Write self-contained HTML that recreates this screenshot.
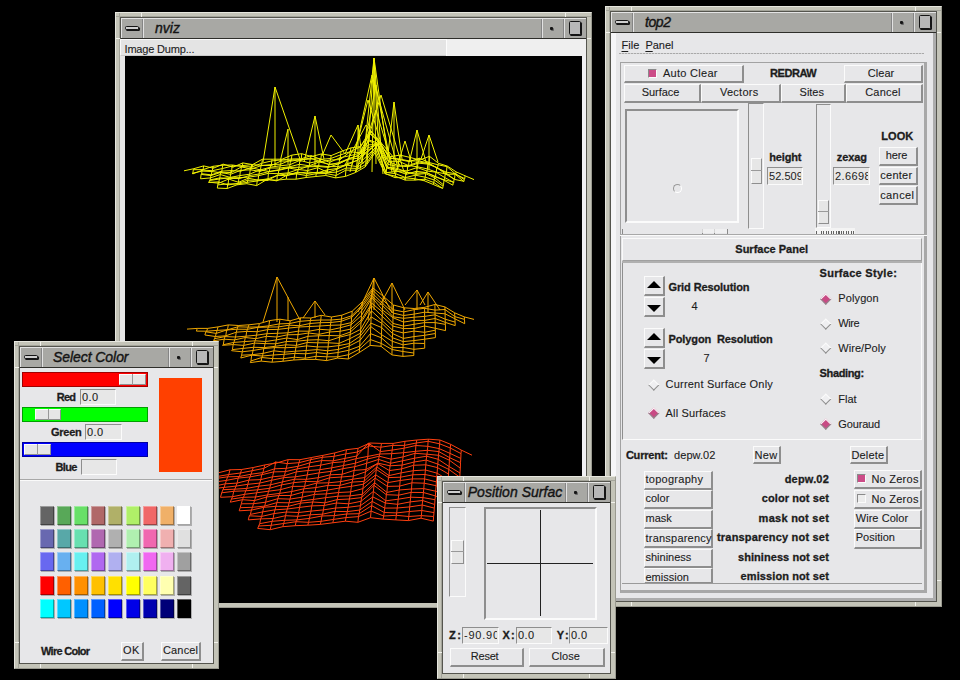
<!DOCTYPE html><html><head><meta charset="utf-8"><style>
html,body{margin:0;padding:0;background:#000;}
body{width:960px;height:680px;position:relative;overflow:hidden;font-family:"Liberation Sans",sans-serif;}
body div,body span,body svg{position:absolute;box-sizing:content-box;}
span{white-space:nowrap;}
</style></head><body>
<div style="left:115px;top:12px;width:475px;height:594px;background:#c4c4b8;border:1px solid;border-color:#e6e6de #9a9a90 #9a9a90 #e6e6de"></div>
<div style="left:116px;top:16px;width:475px;height:1px;background:#a4a49a"></div>
<div style="left:119px;top:13px;width:1px;height:594px;background:#a4a49a"></div>
<div style="left:141px;top:13px;width:1px;height:5px;background:#f2f2ec"></div>
<div style="left:565px;top:13px;width:1px;height:5px;background:#f2f2ec"></div>
<div style="left:116px;top:38px;width:5px;height:1px;background:#f2f2ec"></div>
<div style="left:586px;top:38px;width:5px;height:1px;background:#f2f2ec"></div>
<div style="left:141px;top:602px;width:1px;height:5px;background:#f2f2ec"></div>
<div style="left:565px;top:602px;width:1px;height:5px;background:#f2f2ec"></div>
<div style="left:116px;top:581px;width:5px;height:1px;background:#f2f2ec"></div>
<div style="left:586px;top:581px;width:5px;height:1px;background:#f2f2ec"></div>
<div style="left:120px;top:17px;width:465px;height:584px;border:1px solid #55554e;background:#e7e7e9"></div>
<div style="left:121px;top:18px;width:464px;height:20px;background:#a8a8a4;border-left:1px solid #e4e4e4;border-top:1px solid #e4e4e4"></div>
<div style="left:121px;top:38px;width:465px;height:1px;background:#2e2e2a"></div>
<div style="left:142px;top:19px;width:1px;height:19px;background:#858585"></div>
<div style="left:143px;top:19px;width:1px;height:19px;background:#e2e2e2"></div>
<div style="left:125px;top:26px;width:12px;height:2px;background:#cfcfcf;border:1px solid #151515;border-radius:1.5px;box-shadow:1px 1px 0 #151515"></div>
<div style="left:541px;top:19px;width:1px;height:19px;background:#858585"></div>
<div style="left:542px;top:19px;width:1px;height:19px;background:#e2e2e2"></div>
<div style="left:563px;top:19px;width:1px;height:19px;background:#858585"></div>
<div style="left:564px;top:19px;width:1px;height:19px;background:#e2e2e2"></div>
<div style="left:550px;top:27px;width:3px;height:3px;background:#151515;border-radius:1px;box-shadow:1px 1px 0 #666"></div>
<div style="left:569px;top:21px;width:10px;height:12px;border:1px solid #151515;background:#b8b8b8;box-shadow:1px 1px 0 #151515;border-radius:1.5px"></div>
<span style="left:155.00px;top:21.35px;font-size:14px;line-height:14px;font-weight:normal;font-style:italic;color:#141414;letter-spacing:0.035px;-webkit-text-stroke:0.4px #141414;">nviz</span>
<div style="left:120px;top:39px;width:325px;height:15px;background:#e4e4e4;border-style:solid;border-width:1px 1px 1px 1px;border-color:#fafafa #cacaca #cacaca #fafafa;"></div>
<div style="left:447px;top:39px;width:139px;height:17px;background:#efefef"></div>
<div style="left:446px;top:39px;width:1px;height:17px;background:#fcfcfc"></div>
<span style="left:124.50px;top:44.19px;font-size:11px;line-height:11px;font-weight:normal;font-style:normal;color:#1c1c1c;-webkit-text-stroke:0.10px #1c1c1c;letter-spacing:-0.178px;">Image Dump...</span>
<div style="left:125px;top:56px;width:457px;height:547px;background:#000"></div>
<div style="left:582px;top:56px;width:4px;height:547px;background:#f0f0f2"></div>
<div style="left:120px;top:56px;width:5px;height:547px;background:#e6e6e6"></div>
<svg style="left:0;top:0" width="960" height="680" viewBox="0 0 960 680"><path d="M184.0,170.8 L193.8,168.7 L203.6,165.9 L213.4,168.2 L223.2,164.1 L233.0,167.2 L242.8,162.9 L252.6,164.6 L262.4,159.2 L272.2,159.2 L282.1,159.2 L291.9,155.1 L301.7,153.7 L311.5,156.6 L321.4,153.9 L331.2,155.6 L341.0,151.5 L350.9,147.9 L360.7,146.5 L370.5,133.2 L380.4,144.9 L390.2,156.7 L400.0,155.1 L409.9,157.4 L419.7,160.0 L429.5,156.3 L438.5,163.3 L447.4,166.1 L456.2,171.9 L465.1,175.8 L474.0,179.6 M193.3,169.7 L203.1,169.6 L212.9,166.3 L222.7,165.2 L232.5,165.0 L242.3,166.6 L252.1,166.9 L261.9,163.2 L271.8,160.9 L281.6,159.9 L291.4,159.0 L301.3,158.8 L311.1,155.6 L320.9,159.4 L330.7,158.5 L340.6,154.9 L350.4,151.6 L360.2,147.0 L370.1,130.7 L379.9,142.7 L389.8,157.7 L399.6,159.7 L409.4,161.6 L419.3,158.2 L429.1,162.5 L438.0,164.8 L446.9,166.6 L455.8,174.2 L464.7,178.7 M192.8,173.9 L202.6,170.1 L212.4,170.7 L222.2,168.6 L232.0,166.1 L241.8,165.7 L251.7,164.6 L261.5,165.3 L271.3,165.6 L281.1,161.0 L291.0,161.1 L300.8,159.6 L310.6,158.1 L320.5,161.8 L330.3,160.0 L340.1,159.6 L350.0,151.8 L359.8,152.7 L369.6,133.7 L379.5,141.8 L389.3,158.3 L399.2,158.9 L409.0,160.9 L418.8,160.9 L428.7,163.0 L437.6,168.3 L446.5,172.2 L455.4,173.7 L464.3,179.6 M192.3,173.2 L202.1,171.1 L211.9,171.5 L221.7,172.9 L231.6,172.4 L241.4,166.9 L251.2,169.1 L261.0,165.7 L270.8,164.6 L280.7,164.2 L290.5,160.0 L300.3,159.8 L310.2,159.0 L320.0,158.8 L329.8,162.3 L339.7,157.8 L349.5,155.8 L359.3,153.3 L369.2,140.1 L379.0,143.4 L388.9,161.4 L398.7,161.2 L408.6,165.7 L418.4,161.9 L428.3,163.6 L437.2,168.0 L446.1,174.3 L455.0,174.2 L463.9,181.6 M201.6,173.7 L211.4,174.9 L221.3,171.2 L231.1,170.6 L240.9,171.1 L250.7,167.7 L260.5,169.9 L270.3,167.2 L280.2,165.8 L290.0,164.7 L299.9,160.3 L309.7,163.0 L319.5,160.8 L329.4,164.9 L339.2,162.5 L349.1,158.5 L358.9,155.2 L368.7,140.9 L378.6,145.0 L388.4,161.6 L398.3,165.6 L408.1,166.8 L418.0,163.1 L427.8,164.1 L436.8,167.5 L445.7,172.8 L454.5,179.4 L463.4,181.2 M201.1,174.4 L210.9,175.6 L220.8,172.4 L230.6,174.3 L240.4,170.4 L250.2,169.8 L260.0,171.4 L269.9,168.0 L279.7,168.0 L289.5,166.8 L299.4,164.3 L309.2,165.8 L319.1,162.0 L328.9,164.1 L338.8,163.8 L348.6,158.8 L358.4,155.7 L368.3,144.8 L378.1,144.6 L388.0,164.4 L397.8,166.4 L407.7,165.4 L417.5,166.8 L427.4,168.9 L436.3,172.1 L445.2,173.8 L454.1,179.1 M200.6,178.8 L210.5,177.9 L220.3,174.5 L230.1,177.4 L239.9,175.6 L249.7,174.2 L259.6,169.9 L269.4,171.5 L279.2,169.6 L289.1,167.4 L298.9,167.3 L308.8,166.8 L318.6,166.5 L328.4,167.4 L338.3,163.9 L348.1,159.4 L358.0,158.2 L367.8,147.9 L377.7,144.1 L387.5,167.1 L397.4,169.9 L407.3,170.9 L417.1,167.5 L427.0,171.0 L435.9,172.2 L444.8,177.6 L453.7,182.4 M210.0,179.9 L219.8,177.9 L229.6,178.4 L239.4,178.6 L249.2,175.6 L259.1,174.0 L268.9,171.6 L278.8,170.3 L288.6,168.0 L298.5,169.7 L308.3,166.1 L318.1,165.7 L328.0,166.6 L337.8,166.6 L347.7,164.7 L357.5,160.0 L367.4,150.9 L377.3,143.6 L387.1,167.2 L397.0,168.2 L406.8,172.5 L416.7,173.2 L426.5,172.5 L435.5,177.0 L444.4,179.8 L453.3,182.0 M209.5,180.5 L219.3,179.0 L229.1,177.8 L238.9,177.7 L248.8,177.1 L258.6,175.7 L268.4,173.3 L278.3,173.7 L288.1,172.9 L298.0,169.5 L307.8,170.5 L317.7,167.7 L327.5,172.3 L337.4,169.1 L347.2,163.7 L357.1,160.5 L367.0,152.6 L376.8,143.6 L386.7,168.0 L396.5,170.8 L406.4,174.3 L416.2,171.3 L426.1,172.5 L435.0,176.2 L444.0,180.3 L452.9,185.2 M209.0,182.2 L218.8,183.2 L228.6,179.0 L238.5,182.3 L248.3,178.2 L258.1,180.2 L268.0,178.8 L277.8,175.3 L287.7,173.8 L297.5,173.2 L307.4,172.0 L317.2,173.0 L327.1,169.9 L336.9,168.5 L346.8,165.2 L356.6,166.5 L366.5,156.2 L376.4,147.0 L386.2,172.7 L396.1,171.4 L405.9,172.2 L415.8,174.4 L425.7,173.6 L434.6,177.7 L443.5,184.8 M208.5,182.4 L218.3,181.9 L228.1,185.0 L238.0,183.3 L247.8,180.3 L257.6,180.0 L267.5,180.5 L277.3,175.3 L287.2,175.7 L297.1,172.1 L306.9,173.6 L316.8,172.3 L326.6,172.8 L336.5,172.1 L346.3,168.0 L356.2,168.4 L366.1,160.5 L375.9,146.5 L385.8,172.4 L395.6,173.7 L405.5,177.5 L415.4,175.2 L425.2,177.2 L434.2,179.9 L443.1,186.2 M217.8,184.9 L227.7,183.9 L237.5,184.0 L247.3,182.3 L257.2,181.0 L267.0,179.3 L276.9,180.9 L286.7,175.2 L296.6,173.9 L306.4,175.5 L316.3,173.7 L326.2,173.5 L336.0,175.5 L345.9,170.1 L355.7,170.3 L365.6,164.5 L375.5,149.5 L385.3,174.0 L395.2,176.1 L405.1,180.1 L414.9,180.1 L424.8,179.2 L433.8,182.5 L442.7,188.4 M217.3,188.1 L227.2,188.5 L237.0,184.8 L246.8,183.7 L256.7,185.6 L266.5,179.7 L276.4,180.2 L286.3,179.2 L296.1,179.2 L306.0,177.5 L315.8,176.5 L325.7,175.5 L335.6,177.9 L345.4,176.4 L355.3,172.6 L365.2,166.9 L375.0,152.8 L384.9,173.2 L394.8,177.6 L404.6,177.8 L414.5,178.7 L424.4,180.8 L433.3,184.5 L442.3,188.3 M193.8,168.7 L193.3,169.7 L192.8,173.9 L192.3,173.2 M203.6,165.9 L203.1,169.6 L202.6,170.1 L202.1,171.1 L201.6,173.7 L201.1,174.4 L200.6,178.8 M213.4,168.2 L212.9,166.3 L212.4,170.7 L211.9,171.5 L211.4,174.9 L210.9,175.6 L210.5,177.9 L210.0,179.9 L209.5,180.5 L209.0,182.2 L208.5,182.4 M223.2,164.1 L222.7,165.2 L222.2,168.6 L221.7,172.9 L221.3,171.2 L220.8,172.4 L220.3,174.5 L219.8,177.9 L219.3,179.0 L218.8,183.2 L218.3,181.9 L217.8,184.9 L217.3,188.1 M233.0,167.2 L232.5,165.0 L232.0,166.1 L231.6,172.4 L231.1,170.6 L230.6,174.3 L230.1,177.4 L229.6,178.4 L229.1,177.8 L228.6,179.0 L228.1,185.0 L227.7,183.9 L227.2,188.5 M242.8,162.9 L242.3,166.6 L241.8,165.7 L241.4,166.9 L240.9,171.1 L240.4,170.4 L239.9,175.6 L239.4,178.6 L238.9,177.7 L238.5,182.3 L238.0,183.3 L237.5,184.0 L237.0,184.8 M252.6,164.6 L252.1,166.9 L251.7,164.6 L251.2,169.1 L250.7,167.7 L250.2,169.8 L249.7,174.2 L249.2,175.6 L248.8,177.1 L248.3,178.2 L247.8,180.3 L247.3,182.3 L246.8,183.7 M262.4,159.2 L261.9,163.2 L261.5,165.3 L261.0,165.7 L260.5,169.9 L260.0,171.4 L259.6,169.9 L259.1,174.0 L258.6,175.7 L258.1,180.2 L257.6,180.0 L257.2,181.0 L256.7,185.6 M272.2,159.2 L271.8,160.9 L271.3,165.6 L270.8,164.6 L270.3,167.2 L269.9,168.0 L269.4,171.5 L268.9,171.6 L268.4,173.3 L268.0,178.8 L267.5,180.5 L267.0,179.3 L266.5,179.7 M282.1,159.2 L281.6,159.9 L281.1,161.0 L280.7,164.2 L280.2,165.8 L279.7,168.0 L279.2,169.6 L278.8,170.3 L278.3,173.7 L277.8,175.3 L277.3,175.3 L276.9,180.9 L276.4,180.2 M291.9,155.1 L291.4,159.0 L291.0,161.1 L290.5,160.0 L290.0,164.7 L289.5,166.8 L289.1,167.4 L288.6,168.0 L288.1,172.9 L287.7,173.8 L287.2,175.7 L286.7,175.2 L286.3,179.2 M301.7,153.7 L301.3,158.8 L300.8,159.6 L300.3,159.8 L299.9,160.3 L299.4,164.3 L298.9,167.3 L298.5,169.7 L298.0,169.5 L297.5,173.2 L297.1,172.1 L296.6,173.9 L296.1,179.2 M311.5,156.6 L311.1,155.6 L310.6,158.1 L310.2,159.0 L309.7,163.0 L309.2,165.8 L308.8,166.8 L308.3,166.1 L307.8,170.5 L307.4,172.0 L306.9,173.6 L306.4,175.5 L306.0,177.5 M321.4,153.9 L320.9,159.4 L320.5,161.8 L320.0,158.8 L319.5,160.8 L319.1,162.0 L318.6,166.5 L318.1,165.7 L317.7,167.7 L317.2,173.0 L316.8,172.3 L316.3,173.7 L315.8,176.5 M331.2,155.6 L330.7,158.5 L330.3,160.0 L329.8,162.3 L329.4,164.9 L328.9,164.1 L328.4,167.4 L328.0,166.6 L327.5,172.3 L327.1,169.9 L326.6,172.8 L326.2,173.5 L325.7,175.5 M341.0,151.5 L340.6,154.9 L340.1,159.6 L339.7,157.8 L339.2,162.5 L338.8,163.8 L338.3,163.9 L337.8,166.6 L337.4,169.1 L336.9,168.5 L336.5,172.1 L336.0,175.5 L335.6,177.9 M350.9,147.9 L350.4,151.6 L350.0,151.8 L349.5,155.8 L349.1,158.5 L348.6,158.8 L348.1,159.4 L347.7,164.7 L347.2,163.7 L346.8,165.2 L346.3,168.0 L345.9,170.1 L345.4,176.4 M360.7,146.5 L360.2,147.0 L359.8,152.7 L359.3,153.3 L358.9,155.2 L358.4,155.7 L358.0,158.2 L357.5,160.0 L357.1,160.5 L356.6,166.5 L356.2,168.4 L355.7,170.3 L355.3,172.6 M370.5,133.2 L370.1,130.7 L369.6,133.7 L369.2,140.1 L368.7,140.9 L368.3,144.8 L367.8,147.9 L367.4,150.9 L367.0,152.6 L366.5,156.2 L366.1,160.5 L365.6,164.5 L365.2,166.9 M380.4,144.9 L379.9,142.7 L379.5,141.8 L379.0,143.4 L378.6,145.0 L378.1,144.6 L377.7,144.1 L377.3,143.6 L376.8,143.6 L376.4,147.0 L375.9,146.5 L375.5,149.5 L375.0,152.8 M390.2,156.7 L389.8,157.7 L389.3,158.3 L388.9,161.4 L388.4,161.6 L388.0,164.4 L387.5,167.1 L387.1,167.2 L386.7,168.0 L386.2,172.7 L385.8,172.4 L385.3,174.0 L384.9,173.2 M400.0,155.1 L399.6,159.7 L399.2,158.9 L398.7,161.2 L398.3,165.6 L397.8,166.4 L397.4,169.9 L397.0,168.2 L396.5,170.8 L396.1,171.4 L395.6,173.7 L395.2,176.1 L394.8,177.6 M409.9,157.4 L409.4,161.6 L409.0,160.9 L408.6,165.7 L408.1,166.8 L407.7,165.4 L407.3,170.9 L406.8,172.5 L406.4,174.3 L405.9,172.2 L405.5,177.5 L405.1,180.1 L404.6,177.8 M419.7,160.0 L419.3,158.2 L418.8,160.9 L418.4,161.9 L418.0,163.1 L417.5,166.8 L417.1,167.5 L416.7,173.2 L416.2,171.3 L415.8,174.4 L415.4,175.2 L414.9,180.1 L414.5,178.7 M429.5,156.3 L429.1,162.5 L428.7,163.0 L428.3,163.6 L427.8,164.1 L427.4,168.9 L427.0,171.0 L426.5,172.5 L426.1,172.5 L425.7,173.6 L425.2,177.2 L424.8,179.2 L424.4,180.8 M438.5,163.3 L438.0,164.8 L437.6,168.3 L437.2,168.0 L436.8,167.5 L436.3,172.1 L435.9,172.2 L435.5,177.0 L435.0,176.2 L434.6,177.7 L434.2,179.9 L433.8,182.5 L433.3,184.5 M447.4,166.1 L446.9,166.6 L446.5,172.2 L446.1,174.3 L445.7,172.8 L445.2,173.8 L444.8,177.6 L444.4,179.8 L444.0,180.3 L443.5,184.8 L443.1,186.2 L442.7,188.4 L442.3,188.3 M456.2,171.9 L455.8,174.2 L455.4,173.7 L455.0,174.2 L454.5,179.4 L454.1,179.1 L453.7,182.4 L453.3,182.0 L452.9,185.2 M465.1,175.8 L464.7,178.7 L464.3,179.6 L463.9,181.6 L463.4,181.2" fill="none" stroke="#f0f000" stroke-width="1.0" stroke-opacity="1.0"/><path d="M275,87 L263,162 M275,87 L301,162 M275,87 L275,167 M288,129 L288,164 M288,129 L280,162 M315,116 L304,162 M315,116 L324,159 M315,116 L315,167 M331,135 L322,156 M331,135 L345,154 M358,125 L345,154 M358,125 L363,164 M358,125 L358,169 M374,58 L364,154 M374,58 L367,164 M374,58 L372,172 M374,58 L379,154 M374,58 L383,174 M374,58 L388,159 M374,58 L376,164 M376,85 L360,169 M376,85 L392,172 M376,110 L356,172 M376,110 L395,174 M372,75 L352,165 M372,75 L398,168 M368,100 L350,172 M368,100 L386,160 M381,95 L362,160 M381,95 L404,172 M366,125 L345,165 M366,125 L400,165 M394,102 L388,154 M394,102 L402,159 M394,102 L394,169 M405,141 L398,164 M405,141 L412,164 M417,130 L410,159 M417,130 L426,162 M417,130 L417,169 M429,135 L421,159 M429,135 L438,162 M429,135 L429,169" fill="none" stroke="#f0f000" stroke-width="1.0"/><path d="M187.0,329.1 L197.3,328.4 L207.6,328.4 L218.0,326.9 L228.3,324.9 L238.6,325.5 L248.9,324.8 L259.3,323.6 L269.6,320.6 L279.9,319.2 L290.2,320.8 L300.6,317.8 L310.9,318.0 L321.2,315.3 L331.5,317.0 L341.8,315.2 L352.2,311.2 L362.5,301.6 L372.8,287.9 L383.2,296.2 L393.5,305.0 L403.9,307.8 L414.2,308.5 L424.6,307.3 L434.9,304.5 L444.9,306.9 L454.6,312.8 L464.3,316.9 L474.0,319.4 M196.4,331.1 L206.7,331.2 L217.1,330.4 L227.5,329.8 L237.8,326.8 L248.2,327.1 L258.6,327.0 L268.9,325.8 L279.3,323.9 L289.7,323.5 L300.0,321.3 L310.4,320.5 L320.8,320.0 L331.1,320.0 L341.5,319.1 L351.9,315.7 L362.2,304.9 L372.6,290.0 L383.0,300.2 L393.4,309.8 L403.8,311.9 L414.2,309.6 L424.6,308.3 L435.0,310.1 L445.0,309.5 L454.8,316.6 L464.5,319.4 M205.8,331.8 L216.2,333.4 L226.6,330.0 L237.1,329.2 L247.5,329.3 L257.9,327.3 L268.3,327.1 L278.7,326.9 L289.1,325.2 L299.5,325.7 L309.9,323.5 L320.3,322.7 L330.8,322.5 L341.2,321.3 L351.6,317.5 L362.0,307.1 L372.4,293.2 L382.8,303.5 L393.3,313.1 L403.7,315.5 L414.2,314.1 L424.6,312.2 L435.0,313.0 L445.1,313.8 L454.9,318.8 L464.7,323.7 M204.9,335.0 L215.4,336.5 L225.8,335.8 L236.3,332.2 L246.7,331.4 L257.2,331.7 L267.6,329.6 L278.1,329.4 L288.6,328.1 L299.0,327.0 L309.5,326.5 L319.9,326.0 L330.4,325.3 L340.8,325.0 L351.3,322.6 L361.7,310.6 L372.2,296.1 L382.7,305.8 L393.2,316.8 L403.6,318.3 L414.1,317.2 L424.6,316.4 L435.1,314.8 L445.2,319.2 L455.1,322.1 M214.5,338.7 L225.0,336.6 L235.5,337.0 L246.0,336.2 L256.5,335.2 L267.0,333.7 L277.5,333.3 L288.0,332.8 L298.5,331.1 L309.0,331.2 L319.5,329.3 L330.0,330.0 L340.5,327.7 L351.0,324.8 L361.5,315.4 L372.0,297.5 L382.5,310.0 L393.0,317.7 L403.6,322.1 L414.1,320.4 L424.6,320.4 L435.1,318.5 L445.3,322.4 L455.2,325.6 M213.6,340.7 L224.2,339.2 L234.7,339.9 L245.3,337.5 L255.8,338.7 L266.3,336.3 L276.9,337.0 L287.4,334.8 L298.0,334.6 L308.5,333.0 L319.1,334.3 L329.6,332.0 L340.1,331.3 L350.7,329.1 L361.2,320.0 L371.8,303.2 L382.3,311.9 L392.9,323.4 L403.5,326.1 L414.1,324.3 L424.6,322.6 L435.2,322.6 L445.4,324.4 M223.3,344.7 L233.9,342.4 L244.5,341.6 L255.1,340.8 L265.7,341.5 L276.3,339.9 L286.9,338.0 L297.5,339.6 L308.0,336.3 L318.6,335.8 L329.2,335.5 L339.8,335.8 L350.4,332.0 L361.0,322.5 L371.6,305.9 L382.2,316.2 L392.8,326.1 L403.4,328.6 L414.0,328.5 L424.6,326.0 L435.3,328.3 L445.5,330.6 M222.5,345.3 L233.2,344.6 L243.8,345.4 L254.4,343.1 L265.0,343.6 L275.7,343.8 L286.3,341.5 L296.9,341.2 L307.6,340.1 L318.2,339.7 L328.8,340.7 L339.5,337.2 L350.1,334.6 L360.7,329.3 L371.4,310.8 L382.0,320.6 L392.7,330.3 L403.3,332.9 L414.0,331.1 L424.7,332.3 L435.3,330.2 M232.4,349.6 L243.1,348.4 L253.7,347.3 L264.4,347.6 L275.1,346.3 L285.8,344.8 L296.4,345.4 L307.1,342.5 L317.8,342.8 L328.4,342.8 L339.1,343.4 L349.8,338.7 L360.5,333.2 L371.1,316.8 L381.8,323.3 L392.6,333.6 L403.3,338.4 L414.0,336.6 L424.7,335.3 L435.4,333.5 M231.6,350.7 L242.3,351.8 L253.0,350.5 L263.8,348.6 L274.5,347.6 L285.2,347.7 L295.9,347.3 L306.6,345.9 L317.3,346.9 L328.1,346.9 L338.8,345.6 L349.5,343.5 L360.2,336.2 L370.9,323.1 L381.7,327.6 L392.4,337.7 L403.2,341.6 L413.9,340.6 L424.7,339.2 L435.4,337.6 M241.6,355.2 L252.3,354.7 L263.1,353.4 L273.9,350.8 L284.6,352.1 L295.4,351.2 L306.2,350.5 L316.9,349.6 L327.7,350.8 L338.4,349.4 L349.2,346.0 L360.0,340.4 L370.7,326.5 L381.5,334.6 L392.3,341.3 L403.1,344.9 L413.9,343.2 L424.7,343.5 M240.8,358.0 L251.6,355.2 L262.5,356.0 L273.3,355.0 L284.1,354.3 L294.9,353.4 L305.7,353.8 L316.5,352.5 L327.3,353.9 L338.1,352.5 L348.9,350.2 L359.7,346.2 L370.5,333.6 L381.4,337.8 L392.2,347.3 L403.0,347.5 L413.9,349.3 L424.7,348.2 M251.0,360.9 L261.8,357.5 L272.7,358.6 L283.5,358.7 L294.4,357.2 L305.2,358.2 L316.1,356.3 L326.9,356.8 L337.8,356.8 L348.6,354.7 L359.5,349.1 L370.3,339.5 L381.2,343.4 L392.1,349.5 L402.9,351.5 L413.8,353.0 M250.3,362.6 L261.2,361.1 L272.1,362.2 L282.9,361.3 L293.8,360.0 L304.7,359.4 L315.6,359.4 L326.5,360.6 L337.4,358.1 L348.3,359.0 L359.2,352.6 L370.1,345.4 L381.0,346.3 L391.9,354.9 L402.9,356.4 L413.8,355.5 M197.3,328.4 L196.4,331.1 M207.6,328.4 L206.7,331.2 L205.8,331.8 L204.9,335.0 M218.0,326.9 L217.1,330.4 L216.2,333.4 L215.4,336.5 L214.5,338.7 L213.6,340.7 M228.3,324.9 L227.5,329.8 L226.6,330.0 L225.8,335.8 L225.0,336.6 L224.2,339.2 L223.3,344.7 L222.5,345.3 M238.6,325.5 L237.8,326.8 L237.1,329.2 L236.3,332.2 L235.5,337.0 L234.7,339.9 L233.9,342.4 L233.2,344.6 L232.4,349.6 L231.6,350.7 M248.9,324.8 L248.2,327.1 L247.5,329.3 L246.7,331.4 L246.0,336.2 L245.3,337.5 L244.5,341.6 L243.8,345.4 L243.1,348.4 L242.3,351.8 L241.6,355.2 L240.8,358.0 M259.3,323.6 L258.6,327.0 L257.9,327.3 L257.2,331.7 L256.5,335.2 L255.8,338.7 L255.1,340.8 L254.4,343.1 L253.7,347.3 L253.0,350.5 L252.3,354.7 L251.6,355.2 L251.0,360.9 L250.3,362.6 M269.6,320.6 L268.9,325.8 L268.3,327.1 L267.6,329.6 L267.0,333.7 L266.3,336.3 L265.7,341.5 L265.0,343.6 L264.4,347.6 L263.8,348.6 L263.1,353.4 L262.5,356.0 L261.8,357.5 L261.2,361.1 M279.9,319.2 L279.3,323.9 L278.7,326.9 L278.1,329.4 L277.5,333.3 L276.9,337.0 L276.3,339.9 L275.7,343.8 L275.1,346.3 L274.5,347.6 L273.9,350.8 L273.3,355.0 L272.7,358.6 L272.1,362.2 M290.2,320.8 L289.7,323.5 L289.1,325.2 L288.6,328.1 L288.0,332.8 L287.4,334.8 L286.9,338.0 L286.3,341.5 L285.8,344.8 L285.2,347.7 L284.6,352.1 L284.1,354.3 L283.5,358.7 L282.9,361.3 M300.6,317.8 L300.0,321.3 L299.5,325.7 L299.0,327.0 L298.5,331.1 L298.0,334.6 L297.5,339.6 L296.9,341.2 L296.4,345.4 L295.9,347.3 L295.4,351.2 L294.9,353.4 L294.4,357.2 L293.8,360.0 M310.9,318.0 L310.4,320.5 L309.9,323.5 L309.5,326.5 L309.0,331.2 L308.5,333.0 L308.0,336.3 L307.6,340.1 L307.1,342.5 L306.6,345.9 L306.2,350.5 L305.7,353.8 L305.2,358.2 L304.7,359.4 M321.2,315.3 L320.8,320.0 L320.3,322.7 L319.9,326.0 L319.5,329.3 L319.1,334.3 L318.6,335.8 L318.2,339.7 L317.8,342.8 L317.3,346.9 L316.9,349.6 L316.5,352.5 L316.1,356.3 L315.6,359.4 M331.5,317.0 L331.1,320.0 L330.8,322.5 L330.4,325.3 L330.0,330.0 L329.6,332.0 L329.2,335.5 L328.8,340.7 L328.4,342.8 L328.1,346.9 L327.7,350.8 L327.3,353.9 L326.9,356.8 L326.5,360.6 M341.8,315.2 L341.5,319.1 L341.2,321.3 L340.8,325.0 L340.5,327.7 L340.1,331.3 L339.8,335.8 L339.5,337.2 L339.1,343.4 L338.8,345.6 L338.4,349.4 L338.1,352.5 L337.8,356.8 L337.4,358.1 M352.2,311.2 L351.9,315.7 L351.6,317.5 L351.3,322.6 L351.0,324.8 L350.7,329.1 L350.4,332.0 L350.1,334.6 L349.8,338.7 L349.5,343.5 L349.2,346.0 L348.9,350.2 L348.6,354.7 L348.3,359.0 M362.5,301.6 L362.2,304.9 L362.0,307.1 L361.7,310.6 L361.5,315.4 L361.2,320.0 L361.0,322.5 L360.7,329.3 L360.5,333.2 L360.2,336.2 L360.0,340.4 L359.7,346.2 L359.5,349.1 L359.2,352.6 M372.8,287.9 L372.6,290.0 L372.4,293.2 L372.2,296.1 L372.0,297.5 L371.8,303.2 L371.6,305.9 L371.4,310.8 L371.1,316.8 L370.9,323.1 L370.7,326.5 L370.5,333.6 L370.3,339.5 L370.1,345.4 M383.2,296.2 L383.0,300.2 L382.8,303.5 L382.7,305.8 L382.5,310.0 L382.3,311.9 L382.2,316.2 L382.0,320.6 L381.8,323.3 L381.7,327.6 L381.5,334.6 L381.4,337.8 L381.2,343.4 L381.0,346.3 M393.5,305.0 L393.4,309.8 L393.3,313.1 L393.2,316.8 L393.0,317.7 L392.9,323.4 L392.8,326.1 L392.7,330.3 L392.6,333.6 L392.4,337.7 L392.3,341.3 L392.2,347.3 L392.1,349.5 L391.9,354.9 M403.9,307.8 L403.8,311.9 L403.7,315.5 L403.6,318.3 L403.6,322.1 L403.5,326.1 L403.4,328.6 L403.3,332.9 L403.3,338.4 L403.2,341.6 L403.1,344.9 L403.0,347.5 L402.9,351.5 L402.9,356.4 M414.2,308.5 L414.2,309.6 L414.2,314.1 L414.1,317.2 L414.1,320.4 L414.1,324.3 L414.0,328.5 L414.0,331.1 L414.0,336.6 L413.9,340.6 L413.9,343.2 L413.9,349.3 L413.8,353.0 L413.8,355.5 M424.6,307.3 L424.6,308.3 L424.6,312.2 L424.6,316.4 L424.6,320.4 L424.6,322.6 L424.6,326.0 L424.7,332.3 L424.7,335.3 L424.7,339.2 L424.7,343.5 L424.7,348.2 M434.9,304.5 L435.0,310.1 L435.0,313.0 L435.1,314.8 L435.1,318.5 L435.2,322.6 L435.3,328.3 L435.3,330.2 L435.4,333.5 L435.4,337.6 M444.9,306.9 L445.0,309.5 L445.1,313.8 L445.2,319.2 L445.3,322.4 L445.4,324.4 L445.5,330.6 M454.6,312.8 L454.8,316.6 L454.9,318.8 L455.1,322.1 L455.2,325.6 M464.3,316.9 L464.5,319.4 L464.7,323.7" fill="none" stroke="#f0a800" stroke-width="1.0" stroke-opacity="1.0"/><path d="M277,277 L263,322 M277,277 L300,320 M277,277 L277,322 M288,297 L288,320 M315,301 L303,318 M315,301 L325,315 M315,301 L315,318 M374,278 L358,312 M374,278 L392,313 M374,278 L374,310 M374,278 L368,320 M392,283 L380,305 M392,283 L405,310 M392,283 L392,312 M417,290 L405,305 M417,290 L425,305 M417,290 L417,310 M428,292 L420,305 M428,292 L440,310 M428,292 L428,312" fill="none" stroke="#f0a800" stroke-width="1.0"/><path d="M195.0,477.2 L206.7,473.5 L218.3,472.8 L230.0,469.8 L241.6,469.5 L253.3,467.5 L264.9,464.9 L276.6,462.9 L288.2,459.6 L299.9,459.7 L311.5,457.5 L323.2,455.3 L334.8,452.9 L346.5,449.7 L358.1,448.3 L369.8,443.0 L381.5,443.4 L393.3,443.4 L405.0,441.3 L416.8,440.0 L428.5,439.2 L439.9,440.0 L450.6,444.3 L461.3,450.1 L472.0,455.2 M205.4,479.1 L217.1,476.5 L228.8,474.5 L240.5,473.0 L252.2,470.7 L263.9,468.4 L275.6,462.0 L287.3,463.6 L299.0,462.7 L310.7,459.7 L322.4,457.3 L334.1,456.3 L345.8,453.9 L357.5,452.0 L369.1,446.0 L380.9,447.2 L392.7,445.4 L404.5,445.4 L416.3,443.0 L428.1,441.3 L439.6,443.8 L450.3,448.0 L461.0,453.6 M204.1,480.3 L215.9,478.5 L227.6,476.8 L239.4,476.5 L251.1,474.2 L262.9,472.6 L274.6,468.8 L286.3,468.3 L298.1,466.3 L309.8,462.8 L321.6,460.6 L333.3,460.8 L345.0,458.4 L356.8,456.0 L368.5,443.0 L380.3,451.6 L392.2,450.1 L404.1,448.2 L415.9,445.5 L427.8,446.3 L439.2,448.6 L450.0,453.4 L460.8,458.4 M214.6,482.0 L226.4,480.4 L238.2,478.1 L250.0,476.9 L261.8,474.7 L273.6,471.9 L285.4,471.6 L297.2,468.9 L309.0,466.8 L320.7,465.2 L332.5,462.7 L344.3,461.7 L356.1,458.7 L367.9,456.4 L379.8,454.0 L391.7,453.7 L403.6,452.7 L415.5,451.3 L427.4,450.3 L438.9,451.6 L449.7,457.7 L460.5,462.7 M213.4,486.4 L225.3,483.8 L237.1,483.1 L248.9,480.1 L260.8,479.6 L272.6,476.8 L284.4,475.7 L296.3,471.9 L308.1,470.5 L319.9,469.7 L331.8,467.8 L343.6,465.5 L355.4,463.2 L367.3,459.1 L379.2,456.2 L391.1,459.2 L403.1,456.9 L415.0,453.3 L427.0,454.2 L438.5,455.3 L449.4,460.2 L460.3,468.2 M212.2,488.8 L224.1,487.4 L236.0,486.1 L247.8,484.3 L259.7,483.1 L271.6,480.3 L283.5,477.7 L295.4,476.8 L307.3,474.9 L319.1,472.9 L331.0,471.4 L342.9,468.7 L354.8,466.7 L366.6,463.3 L378.6,459.4 L390.6,463.3 L402.6,460.8 L414.6,458.2 L426.6,456.2 L438.2,459.3 L449.1,466.5 L460.0,473.0 M222.9,489.7 L234.8,489.2 L246.8,488.4 L258.7,486.2 L270.6,484.8 L282.5,481.9 L294.5,479.2 L306.4,479.3 L318.3,477.7 L330.2,474.8 L342.2,474.3 L354.1,470.4 L366.0,469.5 L378.0,463.2 L390.1,465.8 L402.1,465.1 L414.1,462.0 L426.2,460.1 L437.8,464.1 L448.8,469.4 L459.8,477.2 M221.7,492.8 L233.7,491.3 L245.7,490.8 L257.7,489.8 L269.6,488.3 L281.6,484.9 L293.6,482.7 L305.5,481.5 L317.5,481.7 L329.5,477.8 L341.5,477.0 L353.4,476.0 L365.4,471.9 L377.5,463.6 L389.5,470.6 L401.6,468.9 L413.7,465.3 L425.8,464.8 L437.5,467.6 L448.5,474.0 M220.5,497.3 L232.6,496.7 L244.6,494.3 L256.6,492.8 L268.6,491.2 L280.7,489.6 L292.7,486.4 L304.7,486.3 L316.7,483.1 L328.7,482.8 L340.7,481.6 L352.8,479.2 L364.8,477.5 L376.9,466.9 L389.0,475.6 L401.1,472.9 L413.3,470.7 L425.4,470.0 L437.1,473.2 L448.2,479.9 M231.4,499.1 L243.5,497.3 L255.6,497.0 L267.6,494.9 L279.7,493.4 L291.8,491.5 L303.8,488.8 L315.9,487.6 L328.0,485.4 L340.0,485.4 L352.1,482.1 L364.1,481.4 L376.3,469.4 L388.5,477.6 L400.6,477.2 L412.8,474.8 L425.0,474.5 L436.8,476.9 L447.9,482.4 M230.3,502.2 L242.4,499.7 L254.5,500.6 L266.6,497.0 L278.8,495.5 L290.9,495.5 L303.0,492.1 L315.1,491.7 L327.2,490.2 L339.3,488.0 L351.4,486.3 L363.5,484.2 L375.7,474.8 L387.9,482.6 L400.2,480.5 L412.4,478.9 L424.6,478.9 L436.4,481.9 L447.6,486.7 M241.3,503.8 L253.5,503.7 L265.7,502.2 L277.8,498.7 L290.0,499.1 L302.1,497.2 L314.3,494.4 L326.4,493.9 L338.6,492.5 L350.7,491.9 L362.9,488.6 L375.1,478.1 L387.4,486.4 L399.7,486.1 L411.9,482.8 L424.2,483.2 L436.1,485.7 L447.3,491.9 M240.2,507.7 L252.5,507.3 L264.7,506.1 L276.9,502.6 L289.1,502.8 L301.3,500.9 L313.5,499.4 L325.7,497.7 L337.9,496.2 L350.1,495.9 L362.3,494.3 L374.6,482.7 L386.9,492.4 L399.2,490.0 L411.5,489.0 L423.8,488.6 L435.7,491.2 L447.0,496.1 M239.2,510.8 L251.4,510.1 L263.7,507.3 L275.9,506.3 L288.2,506.4 L300.4,503.2 L312.7,502.0 L324.9,502.8 L337.2,499.6 L349.4,499.0 L361.6,497.6 L374.0,485.3 L386.3,494.7 L398.7,495.2 L411.1,492.4 L423.4,492.5 L435.4,495.9 L446.7,500.4 M250.4,514.4 L262.7,511.9 L275.0,509.8 L287.3,509.0 L299.6,507.4 L311.8,505.9 L324.1,505.5 L336.4,503.0 L348.7,503.8 L361.0,501.3 L373.4,491.4 L385.8,500.8 L398.2,499.2 L410.6,497.2 L423.0,497.6 L435.0,499.7 M249.3,515.8 L261.7,516.4 L274.0,513.6 L286.4,512.0 L298.7,512.5 L311.0,511.1 L323.4,509.9 L335.7,508.0 L348.1,507.3 L360.4,505.7 L372.8,496.9 L385.3,503.0 L397.7,504.3 L410.2,501.9 L422.6,500.5 L434.7,504.5 M248.3,519.9 L260.7,518.9 L273.1,518.5 L285.5,515.7 L297.8,516.3 L310.2,514.8 L322.6,514.2 L335.0,511.4 L347.4,511.6 L359.8,510.0 L372.2,501.4 L384.7,508.1 L397.2,508.0 L409.7,506.9 L422.2,505.0 L434.3,508.1 M259.7,523.7 L272.1,521.3 L284.6,520.3 L297.0,519.9 L309.4,518.4 L321.9,516.0 L334.3,515.6 L346.7,514.0 L359.1,513.7 L371.7,505.6 L384.2,512.5 L396.7,512.9 L409.3,511.5 L421.8,510.5 L434.0,512.6 M258.7,526.0 L271.2,525.3 L283.7,523.5 L296.1,521.7 L308.6,522.3 L321.1,521.3 L333.6,519.4 L346.0,517.6 L358.5,516.6 L371.1,511.1 L383.7,516.0 L396.3,515.3 L408.8,516.5 L421.4,515.6 L433.6,516.5 M257.7,528.4 L270.2,529.7 L282.8,526.7 L295.3,525.7 L307.8,525.2 L320.3,524.4 L332.8,522.8 L345.4,521.2 L357.9,522.3 L370.5,517.7 L383.1,519.1 L395.8,519.9 L408.4,520.6 L421.0,518.2 L433.3,521.1 M206.7,473.5 L205.4,479.1 L204.1,480.3 M218.3,472.8 L217.1,476.5 L215.9,478.5 L214.6,482.0 L213.4,486.4 L212.2,488.8 M230.0,469.8 L228.8,474.5 L227.6,476.8 L226.4,480.4 L225.3,483.8 L224.1,487.4 L222.9,489.7 L221.7,492.8 L220.5,497.3 M241.6,469.5 L240.5,473.0 L239.4,476.5 L238.2,478.1 L237.1,483.1 L236.0,486.1 L234.8,489.2 L233.7,491.3 L232.6,496.7 L231.4,499.1 L230.3,502.2 M253.3,467.5 L252.2,470.7 L251.1,474.2 L250.0,476.9 L248.9,480.1 L247.8,484.3 L246.8,488.4 L245.7,490.8 L244.6,494.3 L243.5,497.3 L242.4,499.7 L241.3,503.8 L240.2,507.7 L239.2,510.8 M264.9,464.9 L263.9,468.4 L262.9,472.6 L261.8,474.7 L260.8,479.6 L259.7,483.1 L258.7,486.2 L257.7,489.8 L256.6,492.8 L255.6,497.0 L254.5,500.6 L253.5,503.7 L252.5,507.3 L251.4,510.1 L250.4,514.4 L249.3,515.8 L248.3,519.9 M276.6,462.9 L275.6,462.0 L274.6,468.8 L273.6,471.9 L272.6,476.8 L271.6,480.3 L270.6,484.8 L269.6,488.3 L268.6,491.2 L267.6,494.9 L266.6,497.0 L265.7,502.2 L264.7,506.1 L263.7,507.3 L262.7,511.9 L261.7,516.4 L260.7,518.9 L259.7,523.7 L258.7,526.0 L257.7,528.4 M288.2,459.6 L287.3,463.6 L286.3,468.3 L285.4,471.6 L284.4,475.7 L283.5,477.7 L282.5,481.9 L281.6,484.9 L280.7,489.6 L279.7,493.4 L278.8,495.5 L277.8,498.7 L276.9,502.6 L275.9,506.3 L275.0,509.8 L274.0,513.6 L273.1,518.5 L272.1,521.3 L271.2,525.3 L270.2,529.7 M299.9,459.7 L299.0,462.7 L298.1,466.3 L297.2,468.9 L296.3,471.9 L295.4,476.8 L294.5,479.2 L293.6,482.7 L292.7,486.4 L291.8,491.5 L290.9,495.5 L290.0,499.1 L289.1,502.8 L288.2,506.4 L287.3,509.0 L286.4,512.0 L285.5,515.7 L284.6,520.3 L283.7,523.5 L282.8,526.7 M311.5,457.5 L310.7,459.7 L309.8,462.8 L309.0,466.8 L308.1,470.5 L307.3,474.9 L306.4,479.3 L305.5,481.5 L304.7,486.3 L303.8,488.8 L303.0,492.1 L302.1,497.2 L301.3,500.9 L300.4,503.2 L299.6,507.4 L298.7,512.5 L297.8,516.3 L297.0,519.9 L296.1,521.7 L295.3,525.7 M323.2,455.3 L322.4,457.3 L321.6,460.6 L320.7,465.2 L319.9,469.7 L319.1,472.9 L318.3,477.7 L317.5,481.7 L316.7,483.1 L315.9,487.6 L315.1,491.7 L314.3,494.4 L313.5,499.4 L312.7,502.0 L311.8,505.9 L311.0,511.1 L310.2,514.8 L309.4,518.4 L308.6,522.3 L307.8,525.2 M334.8,452.9 L334.1,456.3 L333.3,460.8 L332.5,462.7 L331.8,467.8 L331.0,471.4 L330.2,474.8 L329.5,477.8 L328.7,482.8 L328.0,485.4 L327.2,490.2 L326.4,493.9 L325.7,497.7 L324.9,502.8 L324.1,505.5 L323.4,509.9 L322.6,514.2 L321.9,516.0 L321.1,521.3 L320.3,524.4 M346.5,449.7 L345.8,453.9 L345.0,458.4 L344.3,461.7 L343.6,465.5 L342.9,468.7 L342.2,474.3 L341.5,477.0 L340.7,481.6 L340.0,485.4 L339.3,488.0 L338.6,492.5 L337.9,496.2 L337.2,499.6 L336.4,503.0 L335.7,508.0 L335.0,511.4 L334.3,515.6 L333.6,519.4 L332.8,522.8 M358.1,448.3 L357.5,452.0 L356.8,456.0 L356.1,458.7 L355.4,463.2 L354.8,466.7 L354.1,470.4 L353.4,476.0 L352.8,479.2 L352.1,482.1 L351.4,486.3 L350.7,491.9 L350.1,495.9 L349.4,499.0 L348.7,503.8 L348.1,507.3 L347.4,511.6 L346.7,514.0 L346.0,517.6 L345.4,521.2 M369.8,443.0 L369.1,446.0 L368.5,443.0 L367.9,456.4 L367.3,459.1 L366.6,463.3 L366.0,469.5 L365.4,471.9 L364.8,477.5 L364.1,481.4 L363.5,484.2 L362.9,488.6 L362.3,494.3 L361.6,497.6 L361.0,501.3 L360.4,505.7 L359.8,510.0 L359.1,513.7 L358.5,516.6 L357.9,522.3 M381.5,443.4 L380.9,447.2 L380.3,451.6 L379.8,454.0 L379.2,456.2 L378.6,459.4 L378.0,463.2 L377.5,463.6 L376.9,466.9 L376.3,469.4 L375.7,474.8 L375.1,478.1 L374.6,482.7 L374.0,485.3 L373.4,491.4 L372.8,496.9 L372.2,501.4 L371.7,505.6 L371.1,511.1 L370.5,517.7 M393.3,443.4 L392.7,445.4 L392.2,450.1 L391.7,453.7 L391.1,459.2 L390.6,463.3 L390.1,465.8 L389.5,470.6 L389.0,475.6 L388.5,477.6 L387.9,482.6 L387.4,486.4 L386.9,492.4 L386.3,494.7 L385.8,500.8 L385.3,503.0 L384.7,508.1 L384.2,512.5 L383.7,516.0 L383.1,519.1 M405.0,441.3 L404.5,445.4 L404.1,448.2 L403.6,452.7 L403.1,456.9 L402.6,460.8 L402.1,465.1 L401.6,468.9 L401.1,472.9 L400.6,477.2 L400.2,480.5 L399.7,486.1 L399.2,490.0 L398.7,495.2 L398.2,499.2 L397.7,504.3 L397.2,508.0 L396.7,512.9 L396.3,515.3 L395.8,519.9 M416.8,440.0 L416.3,443.0 L415.9,445.5 L415.5,451.3 L415.0,453.3 L414.6,458.2 L414.1,462.0 L413.7,465.3 L413.3,470.7 L412.8,474.8 L412.4,478.9 L411.9,482.8 L411.5,489.0 L411.1,492.4 L410.6,497.2 L410.2,501.9 L409.7,506.9 L409.3,511.5 L408.8,516.5 L408.4,520.6 M428.5,439.2 L428.1,441.3 L427.8,446.3 L427.4,450.3 L427.0,454.2 L426.6,456.2 L426.2,460.1 L425.8,464.8 L425.4,470.0 L425.0,474.5 L424.6,478.9 L424.2,483.2 L423.8,488.6 L423.4,492.5 L423.0,497.6 L422.6,500.5 L422.2,505.0 L421.8,510.5 L421.4,515.6 L421.0,518.2 M439.9,440.0 L439.6,443.8 L439.2,448.6 L438.9,451.6 L438.5,455.3 L438.2,459.3 L437.8,464.1 L437.5,467.6 L437.1,473.2 L436.8,476.9 L436.4,481.9 L436.1,485.7 L435.7,491.2 L435.4,495.9 L435.0,499.7 L434.7,504.5 L434.3,508.1 L434.0,512.6 L433.6,516.5 L433.3,521.1 M450.6,444.3 L450.3,448.0 L450.0,453.4 L449.7,457.7 L449.4,460.2 L449.1,466.5 L448.8,469.4 L448.5,474.0 L448.2,479.9 L447.9,482.4 L447.6,486.7 L447.3,491.9 L447.0,496.1 L446.7,500.4 M461.3,450.1 L461.0,453.6 L460.8,458.4 L460.5,462.7 L460.3,468.2 L460.0,473.0 L459.8,477.2" fill="none" stroke="#ff4010" stroke-width="1.0" stroke-opacity="1.0"/></svg>
<div style="left:605px;top:6px;width:335px;height:599px;background:#c4c4b8;border:1px solid;border-color:#e6e6de #9a9a90 #9a9a90 #e6e6de"></div>
<div style="left:606px;top:10px;width:335px;height:1px;background:#a4a49a"></div>
<div style="left:609px;top:7px;width:1px;height:599px;background:#a4a49a"></div>
<div style="left:631px;top:7px;width:1px;height:5px;background:#f2f2ec"></div>
<div style="left:915px;top:7px;width:1px;height:5px;background:#f2f2ec"></div>
<div style="left:606px;top:32px;width:5px;height:1px;background:#f2f2ec"></div>
<div style="left:936px;top:32px;width:5px;height:1px;background:#f2f2ec"></div>
<div style="left:631px;top:601px;width:1px;height:5px;background:#f2f2ec"></div>
<div style="left:915px;top:601px;width:1px;height:5px;background:#f2f2ec"></div>
<div style="left:606px;top:580px;width:5px;height:1px;background:#f2f2ec"></div>
<div style="left:936px;top:580px;width:5px;height:1px;background:#f2f2ec"></div>
<div style="left:610px;top:11px;width:325px;height:589px;border:1px solid #55554e;background:#e7e7e9"></div>
<div style="left:611px;top:33px;width:317px;height:565px;border-style:solid;border-width:0 3px 3px 5px;border-color:#fafafa #adadad #adadad #f6f6f8"></div>
<div style="left:611px;top:12px;width:324px;height:20px;background:#a8a8a4;border-left:1px solid #e4e4e4;border-top:1px solid #e4e4e4"></div>
<div style="left:611px;top:32px;width:325px;height:1px;background:#2e2e2a"></div>
<div style="left:632px;top:13px;width:1px;height:19px;background:#858585"></div>
<div style="left:633px;top:13px;width:1px;height:19px;background:#e2e2e2"></div>
<div style="left:615px;top:20px;width:12px;height:2px;background:#cfcfcf;border:1px solid #151515;border-radius:1.5px;box-shadow:1px 1px 0 #151515"></div>
<div style="left:891px;top:13px;width:1px;height:19px;background:#858585"></div>
<div style="left:892px;top:13px;width:1px;height:19px;background:#e2e2e2"></div>
<div style="left:913px;top:13px;width:1px;height:19px;background:#858585"></div>
<div style="left:914px;top:13px;width:1px;height:19px;background:#e2e2e2"></div>
<div style="left:900px;top:21px;width:3px;height:3px;background:#151515;border-radius:1px;box-shadow:1px 1px 0 #666"></div>
<div style="left:919px;top:15px;width:10px;height:12px;border:1px solid #151515;background:#b8b8b8;box-shadow:1px 1px 0 #151515;border-radius:1.5px"></div>
<span style="left:645.00px;top:15.35px;font-size:14px;line-height:14px;font-weight:normal;font-style:italic;color:#141414;letter-spacing:-0.415px;-webkit-text-stroke:0.4px #141414;">top2</span>
<div style="left:619px;top:53px;width:305px;height:1px;background:repeating-linear-gradient(90deg,#999 0 2px,#ccc 2px 3px);opacity:.8"></div>
<span style="left:621.50px;top:40.19px;font-size:11px;line-height:11px;font-weight:normal;font-style:normal;color:#1c1c1c;-webkit-text-stroke:0.10px #1c1c1c;letter-spacing:0.003px;text-decoration-thickness:1.5px;text-underline-offset:1.5px;"><u>F</u>ile&nbsp; <u>P</u>anel</span>
<div style="left:620px;top:62px;width:303px;height:527px;background:#e7e7e9;border-style:solid;border-width:1px 3px 3px 1px;border-color:#a2a2a2 #a8a8a8 #a8a8a8 #a2a2a2;"></div>
<div style="left:624px;top:65px;width:117px;height:15px;background:#e7e7e9;border-style:solid;border-width:1px 2px 2px 1px;border-color:#fbfbfb #8e8e8e #8e8e8e #fbfbfb;"></div>
<div style="left:648px;top:69px;width:7px;height:7px;background:#cc4c88;border:1px solid;border-color:#8a8a8a #fbfbfb #fbfbfb #8a8a8a"></div>
<span style="left:663.00px;top:67.99px;font-size:11px;line-height:11px;font-weight:normal;font-style:normal;color:#1c1c1c;-webkit-text-stroke:0.10px #1c1c1c;letter-spacing:0.281px;">Auto Clear</span>
<span style="left:770.00px;top:68.39px;font-size:11px;line-height:11px;font-weight:bold;font-style:normal;color:#1c1c1c;-webkit-text-stroke:0.30px #1c1c1c;letter-spacing:-0.438px;">REDRAW</span>
<div style="left:844px;top:65px;width:76px;height:15px;background:#e7e7e9;border-style:solid;border-width:1px 2px 2px 1px;border-color:#fbfbfb #8e8e8e #8e8e8e #fbfbfb;"></div>
<span style="left:867.80px;top:68.09px;font-size:11px;line-height:11px;font-weight:normal;font-style:normal;color:#1c1c1c;-webkit-text-stroke:0.10px #1c1c1c;letter-spacing:0.029px;">Clear</span>
<div style="left:624px;top:84px;width:74px;height:16px;background:#e7e7e9;border-style:solid;border-width:1px 2px 2px 1px;border-color:#fbfbfb #8e8e8e #8e8e8e #fbfbfb;"></div>
<span style="left:641.70px;top:87.09px;font-size:11px;line-height:11px;font-weight:normal;font-style:normal;color:#1c1c1c;-webkit-text-stroke:0.10px #1c1c1c;letter-spacing:-0.051px;">Surface</span>
<div style="left:701px;top:84px;width:77px;height:16px;background:#e7e7e9;border-style:solid;border-width:1px 2px 2px 1px;border-color:#fbfbfb #8e8e8e #8e8e8e #fbfbfb;"></div>
<span style="left:720.00px;top:87.09px;font-size:11px;line-height:11px;font-weight:normal;font-style:normal;color:#1c1c1c;-webkit-text-stroke:0.10px #1c1c1c;letter-spacing:0.253px;">Vectors</span>
<div style="left:781px;top:84px;width:62px;height:16px;background:#e7e7e9;border-style:solid;border-width:1px 2px 2px 1px;border-color:#fbfbfb #8e8e8e #8e8e8e #fbfbfb;"></div>
<span style="left:799.60px;top:87.09px;font-size:11px;line-height:11px;font-weight:normal;font-style:normal;color:#1c1c1c;-webkit-text-stroke:0.10px #1c1c1c;letter-spacing:-0.039px;">Sites</span>
<div style="left:846px;top:84px;width:74px;height:16px;background:#e7e7e9;border-style:solid;border-width:1px 2px 2px 1px;border-color:#fbfbfb #8e8e8e #8e8e8e #fbfbfb;"></div>
<span style="left:865.20px;top:87.09px;font-size:11px;line-height:11px;font-weight:normal;font-style:normal;color:#1c1c1c;-webkit-text-stroke:0.10px #1c1c1c;letter-spacing:0.212px;">Cancel</span>
<div style="left:625px;top:109px;width:110px;height:110px;background:#e7e7e9;border-style:solid;border-width:2px 2px 2px 2px;border-color:#8e8e8e #fbfbfb #fbfbfb #8e8e8e;"></div>
<div style="left:672.5px;top:183.5px;width:7px;height:7px;border-radius:50%;border:1px solid;border-color:#999 #fff #fff #999"></div>
<div style="left:622px;top:229px;width:1px;height:5px;background:#8a8a8a"></div>
<div style="left:702px;top:229px;width:1px;height:5px;background:#8a8a8a"></div>
<div style="left:714px;top:229px;width:1px;height:5px;background:#8a8a8a"></div>
<div style="left:727px;top:229px;width:1px;height:5px;background:#8a8a8a"></div>
<div style="left:702px;top:229px;width:25px;height:4px;background:#f4f4f4;opacity:.7"></div>
<div style="left:748px;top:103px;width:14px;height:124px;background:#e7e7e9;border-style:solid;border-width:1px 1px 1px 1px;border-color:#8e8e8e #fbfbfb #fbfbfb #8e8e8e;"></div>
<div style="left:751px;top:158px;width:9px;height:24px;background:#e6e6e6;border-style:solid;border-width:1px 1px 1px 1px;border-color:#fbfbfb #8e8e8e #8e8e8e #fbfbfb;"></div>
<div style="left:751px;top:170px;width:11px;height:1px;background:#9a9a9a"></div>
<span style="left:769.30px;top:152.39px;font-size:11px;line-height:11px;font-weight:bold;font-style:normal;color:#1c1c1c;-webkit-text-stroke:0.30px #1c1c1c;letter-spacing:-0.158px;">height</span>
<div style="left:767px;top:167px;width:34px;height:16px;background:#e7e7e7;border-style:solid;border-width:1px 1px 1px 1px;border-color:#8e8e8e #fbfbfb #fbfbfb #8e8e8e;"></div>
<div style="left:768px;top:168px;width:33px;height:16px;overflow:hidden">
<span style="left:1px;top:2.69px;font-size:11px;line-height:11px;color:#1c1c1c;letter-spacing:0.040px">52.5096</span></div>
<div style="left:816px;top:104px;width:13px;height:122px;background:#e7e7e9;border-style:solid;border-width:1px 1px 1px 1px;border-color:#8e8e8e #fbfbfb #fbfbfb #8e8e8e;"></div>
<div style="left:818px;top:200px;width:9px;height:22px;background:#e6e6e6;border-style:solid;border-width:1px 1px 1px 1px;border-color:#fbfbfb #8e8e8e #8e8e8e #fbfbfb;"></div>
<div style="left:818px;top:211px;width:11px;height:1px;background:#9a9a9a"></div>
<div style="left:815px;top:228px;width:40px;height:6px;background:#f4f4f4"></div>
<div style="left:816px;top:230.5px;width:38px;height:3px;background:repeating-linear-gradient(90deg,#333 0 1px,transparent 1px 2.5px);opacity:.75"></div>
<span style="left:836.80px;top:152.39px;font-size:11px;line-height:11px;font-weight:bold;font-style:normal;color:#1c1c1c;-webkit-text-stroke:0.30px #1c1c1c;letter-spacing:-0.092px;">zexag</span>
<div style="left:833px;top:167px;width:35px;height:16px;background:#e7e7e7;border-style:solid;border-width:1px 1px 1px 1px;border-color:#8e8e8e #fbfbfb #fbfbfb #8e8e8e;"></div>
<div style="left:834px;top:168px;width:34px;height:16px;overflow:hidden">
<span style="left:1px;top:2.69px;font-size:11px;line-height:11px;color:#1c1c1c;letter-spacing:0.374px">2.66986</span></div>
<span style="left:881.30px;top:131.39px;font-size:11px;line-height:11px;font-weight:bold;font-style:normal;color:#1c1c1c;-webkit-text-stroke:0.30px #1c1c1c;letter-spacing:0.075px;">LOOK</span>
<div style="left:879px;top:147px;width:36px;height:16px;background:#e7e7e9;border-style:solid;border-width:1px 2px 2px 1px;border-color:#fbfbfb #8e8e8e #8e8e8e #fbfbfb;"></div>
<span style="left:885.70px;top:150.09px;font-size:11px;line-height:11px;font-weight:normal;font-style:normal;color:#1c1c1c;-webkit-text-stroke:0.10px #1c1c1c;letter-spacing:-0.105px;">here</span>
<div style="left:879px;top:167px;width:36px;height:15px;background:#e7e7e9;border-style:solid;border-width:1px 2px 2px 1px;border-color:#fbfbfb #8e8e8e #8e8e8e #fbfbfb;"></div>
<span style="left:880.20px;top:170.09px;font-size:11px;line-height:11px;font-weight:normal;font-style:normal;color:#1c1c1c;-webkit-text-stroke:0.10px #1c1c1c;letter-spacing:0.286px;">center</span>
<div style="left:879px;top:186px;width:36px;height:16px;background:#e7e7e9;border-style:solid;border-width:1px 2px 2px 1px;border-color:#fbfbfb #8e8e8e #8e8e8e #fbfbfb;"></div>
<span style="left:880.20px;top:189.59px;font-size:11px;line-height:11px;font-weight:normal;font-style:normal;color:#1c1c1c;-webkit-text-stroke:0.10px #1c1c1c;letter-spacing:0.401px;">cancel</span>
<div style="left:620px;top:234px;width:307px;height:1px;background:#a8a8a8"></div>
<div style="left:620px;top:235px;width:307px;height:1px;background:#fafafa"></div>
<div style="left:622px;top:238px;width:298px;height:21px;background:#e7e7e9;border-style:solid;border-width:1px 1px 1px 1px;border-color:#fafafa #a0a0a0 #a0a0a0 #fafafa;"></div>
<span style="left:735.30px;top:243.99px;font-size:11px;line-height:11px;font-weight:bold;font-style:normal;color:#1c1c1c;-webkit-text-stroke:0.30px #1c1c1c;letter-spacing:0.004px;">Surface Panel</span>
<div style="left:622px;top:261px;width:298px;height:177px;background:#e7e7e9;border-style:solid;border-width:1px 1px 1px 1px;border-color:#8e8e8e #fbfbfb #fbfbfb #8e8e8e;"></div>
<div style="left:622px;top:261px;width:300px;height:2px;background:#b0b0b0"></div>
<div style="left:644px;top:276px;width:18px;height:17px;background:#e7e7e9;border-style:solid;border-width:1px 2px 2px 1px;border-color:#fbfbfb #8e8e8e #8e8e8e #fbfbfb;"></div>
<div style="left:647.0px;top:280.5px;width:0;height:0;border-left:7px solid transparent;border-right:7px solid transparent;border-bottom:7.5px solid #000"></div>
<div style="left:644px;top:297px;width:18px;height:17px;background:#e7e7e9;border-style:solid;border-width:1px 2px 2px 1px;border-color:#fbfbfb #8e8e8e #8e8e8e #fbfbfb;"></div>
<div style="left:647.0px;top:305.0px;width:0;height:0;border-left:7px solid transparent;border-right:7px solid transparent;border-top:7.5px solid #000"></div>
<div style="left:644px;top:328px;width:18px;height:17px;background:#e7e7e9;border-style:solid;border-width:1px 2px 2px 1px;border-color:#fbfbfb #8e8e8e #8e8e8e #fbfbfb;"></div>
<div style="left:647.0px;top:332.5px;width:0;height:0;border-left:7px solid transparent;border-right:7px solid transparent;border-bottom:7.5px solid #000"></div>
<div style="left:644px;top:349px;width:18px;height:17px;background:#e7e7e9;border-style:solid;border-width:1px 2px 2px 1px;border-color:#fbfbfb #8e8e8e #8e8e8e #fbfbfb;"></div>
<div style="left:647.0px;top:357.0px;width:0;height:0;border-left:7px solid transparent;border-right:7px solid transparent;border-top:7.5px solid #000"></div>
<span style="left:668.50px;top:282.09px;font-size:11px;line-height:11px;font-weight:bold;font-style:normal;color:#1c1c1c;-webkit-text-stroke:0.30px #1c1c1c;letter-spacing:-0.107px;">Grid Resolution</span>
<span style="left:691.50px;top:301.39px;font-size:11px;line-height:11px;font-weight:normal;font-style:normal;color:#1c1c1c;-webkit-text-stroke:0.10px #1c1c1c;">4</span>
<span style="left:668.50px;top:334.39px;font-size:11px;line-height:11px;font-weight:bold;font-style:normal;color:#1c1c1c;-webkit-text-stroke:0.30px #1c1c1c;letter-spacing:-0.112px;">Polygon&nbsp; Resolution</span>
<span style="left:703.50px;top:353.39px;font-size:11px;line-height:11px;font-weight:normal;font-style:normal;color:#1c1c1c;-webkit-text-stroke:0.10px #1c1c1c;">7</span>
<div style="left:649.60px;top:380.60px;width:5.6px;height:5.6px;transform:rotate(45deg);background:#efeff1;border:1.6px solid;border-color:#fbfbfb #8c8c8c #8c8c8c #fbfbfb"></div>
<span style="left:665.60px;top:379.39px;font-size:11px;line-height:11px;font-weight:normal;font-style:normal;color:#1c1c1c;-webkit-text-stroke:0.10px #1c1c1c;letter-spacing:0.205px;">Current Surface Only</span>
<div style="left:649.60px;top:409.10px;width:5.6px;height:5.6px;transform:rotate(45deg);background:#c84a84;border:1.6px solid;border-color:#fbfbfb #8c8c8c #8c8c8c #fbfbfb"></div>
<span style="left:665.60px;top:407.89px;font-size:11px;line-height:11px;font-weight:normal;font-style:normal;color:#1c1c1c;-webkit-text-stroke:0.10px #1c1c1c;letter-spacing:0.137px;">All Surfaces</span>
<span style="left:819.60px;top:267.59px;font-size:11px;line-height:11px;font-weight:bold;font-style:normal;color:#1c1c1c;-webkit-text-stroke:0.30px #1c1c1c;letter-spacing:0.295px;">Surface Style:</span>
<div style="left:821.60px;top:294.60px;width:5.6px;height:5.6px;transform:rotate(45deg);background:#c84a84;border:1.6px solid;border-color:#fbfbfb #8c8c8c #8c8c8c #fbfbfb"></div>
<span style="left:838.30px;top:293.39px;font-size:11px;line-height:11px;font-weight:normal;font-style:normal;color:#1c1c1c;-webkit-text-stroke:0.10px #1c1c1c;letter-spacing:0.108px;">Polygon</span>
<div style="left:821.60px;top:319.60px;width:5.6px;height:5.6px;transform:rotate(45deg);background:#efeff1;border:1.6px solid;border-color:#fbfbfb #8c8c8c #8c8c8c #fbfbfb"></div>
<span style="left:838.30px;top:318.39px;font-size:11px;line-height:11px;font-weight:normal;font-style:normal;color:#1c1c1c;-webkit-text-stroke:0.10px #1c1c1c;letter-spacing:-0.402px;">Wire</span>
<div style="left:821.60px;top:344.10px;width:5.6px;height:5.6px;transform:rotate(45deg);background:#efeff1;border:1.6px solid;border-color:#fbfbfb #8c8c8c #8c8c8c #fbfbfb"></div>
<span style="left:838.30px;top:343.19px;font-size:11px;line-height:11px;font-weight:normal;font-style:normal;color:#1c1c1c;-webkit-text-stroke:0.10px #1c1c1c;letter-spacing:0.042px;">Wire/Poly</span>
<span style="left:819.60px;top:367.89px;font-size:11px;line-height:11px;font-weight:bold;font-style:normal;color:#1c1c1c;-webkit-text-stroke:0.30px #1c1c1c;letter-spacing:-0.364px;">Shading:</span>
<div style="left:821.60px;top:395.10px;width:5.6px;height:5.6px;transform:rotate(45deg);background:#efeff1;border:1.6px solid;border-color:#fbfbfb #8c8c8c #8c8c8c #fbfbfb"></div>
<span style="left:838.30px;top:393.89px;font-size:11px;line-height:11px;font-weight:normal;font-style:normal;color:#1c1c1c;-webkit-text-stroke:0.10px #1c1c1c;letter-spacing:-0.012px;">Flat</span>
<div style="left:821.60px;top:419.60px;width:5.6px;height:5.6px;transform:rotate(45deg);background:#c84a84;border:1.6px solid;border-color:#fbfbfb #8c8c8c #8c8c8c #fbfbfb"></div>
<span style="left:838.30px;top:418.69px;font-size:11px;line-height:11px;font-weight:normal;font-style:normal;color:#1c1c1c;-webkit-text-stroke:0.10px #1c1c1c;letter-spacing:-0.151px;">Gouraud</span>
<span style="left:625.90px;top:449.59px;font-size:11px;line-height:11px;font-weight:bold;font-style:normal;color:#1c1c1c;-webkit-text-stroke:0.30px #1c1c1c;letter-spacing:-0.212px;">Current:</span>
<span style="left:674.00px;top:449.59px;font-size:11px;line-height:11px;font-weight:normal;font-style:normal;color:#1c1c1c;-webkit-text-stroke:0.10px #1c1c1c;letter-spacing:0.070px;">depw.02</span>
<div style="left:753px;top:446px;width:25px;height:15px;background:#e7e7e9;border-style:solid;border-width:1px 2px 2px 1px;border-color:#fbfbfb #8e8e8e #8e8e8e #fbfbfb;"></div>
<span style="left:754.50px;top:450.09px;font-size:11px;line-height:11px;font-weight:normal;font-style:normal;color:#1c1c1c;-webkit-text-stroke:0.10px #1c1c1c;letter-spacing:0.347px;">New</span>
<div style="left:850px;top:446px;width:35px;height:15px;background:#e7e7e9;border-style:solid;border-width:1px 2px 2px 1px;border-color:#fbfbfb #8e8e8e #8e8e8e #fbfbfb;"></div>
<span style="left:851.50px;top:450.09px;font-size:11px;line-height:11px;font-weight:normal;font-style:normal;color:#1c1c1c;-webkit-text-stroke:0.10px #1c1c1c;letter-spacing:0.141px;">Delete</span>
<div style="left:644px;top:471px;width:66px;height:16px;background:#e7e7e9;border-style:solid;border-width:1px 2px 2px 1px;border-color:#fbfbfb #8e8e8e #8e8e8e #fbfbfb;"></div>
<span style="left:645.50px;top:474.19px;font-size:11px;line-height:11px;font-weight:normal;font-style:normal;color:#1c1c1c;-webkit-text-stroke:0.10px #1c1c1c;letter-spacing:0.262px;">topography</span>
<span style="left:784.70px;top:473.89px;font-size:11px;line-height:11px;font-weight:bold;font-style:normal;color:#1c1c1c;-webkit-text-stroke:0.30px #1c1c1c;letter-spacing:0.185px;">depw.02</span>
<div style="left:644px;top:490px;width:66px;height:16px;background:#e7e7e9;border-style:solid;border-width:1px 2px 2px 1px;border-color:#fbfbfb #8e8e8e #8e8e8e #fbfbfb;"></div>
<span style="left:645.50px;top:493.19px;font-size:11px;line-height:11px;font-weight:normal;font-style:normal;color:#1c1c1c;-webkit-text-stroke:0.10px #1c1c1c;">color</span>
<span style="left:761.80px;top:492.89px;font-size:11px;line-height:11px;font-weight:bold;font-style:normal;color:#1c1c1c;-webkit-text-stroke:0.30px #1c1c1c;letter-spacing:0.083px;">color not set</span>
<div style="left:644px;top:510px;width:66px;height:16px;background:#e7e7e9;border-style:solid;border-width:1px 2px 2px 1px;border-color:#fbfbfb #8e8e8e #8e8e8e #fbfbfb;"></div>
<span style="left:645.50px;top:513.19px;font-size:11px;line-height:11px;font-weight:normal;font-style:normal;color:#1c1c1c;-webkit-text-stroke:0.10px #1c1c1c;">mask</span>
<span style="left:758.60px;top:512.89px;font-size:11px;line-height:11px;font-weight:bold;font-style:normal;color:#1c1c1c;-webkit-text-stroke:0.30px #1c1c1c;letter-spacing:0.269px;">mask not set</span>
<div style="left:644px;top:529px;width:66px;height:16px;background:#e7e7e9;border-style:solid;border-width:1px 2px 2px 1px;border-color:#fbfbfb #8e8e8e #8e8e8e #fbfbfb;"></div>
<span style="left:645.50px;top:532.69px;font-size:11px;line-height:11px;font-weight:normal;font-style:normal;color:#1c1c1c;-webkit-text-stroke:0.10px #1c1c1c;letter-spacing:0.220px;">transparency</span>
<span style="left:717.00px;top:532.39px;font-size:11px;line-height:11px;font-weight:bold;font-style:normal;color:#1c1c1c;-webkit-text-stroke:0.30px #1c1c1c;letter-spacing:0.190px;">transparency not set</span>
<div style="left:644px;top:549px;width:66px;height:16px;background:#e7e7e9;border-style:solid;border-width:1px 2px 2px 1px;border-color:#fbfbfb #8e8e8e #8e8e8e #fbfbfb;"></div>
<span style="left:645.50px;top:552.19px;font-size:11px;line-height:11px;font-weight:normal;font-style:normal;color:#1c1c1c;-webkit-text-stroke:0.10px #1c1c1c;">shininess</span>
<span style="left:738.00px;top:551.89px;font-size:11px;line-height:11px;font-weight:bold;font-style:normal;color:#1c1c1c;-webkit-text-stroke:0.30px #1c1c1c;letter-spacing:0.060px;">shininess not set</span>
<div style="left:644px;top:568px;width:66px;height:13px;background:#e7e7e9;border-style:solid;border-width:1px 2px 2px 1px;border-color:#fbfbfb #8e8e8e #8e8e8e #fbfbfb;"></div>
<span style="left:645.50px;top:571.69px;font-size:11px;line-height:11px;font-weight:normal;font-style:normal;color:#1c1c1c;-webkit-text-stroke:0.10px #1c1c1c;">emission</span>
<span style="left:740.60px;top:571.39px;font-size:11px;line-height:11px;font-weight:bold;font-style:normal;color:#1c1c1c;-webkit-text-stroke:0.30px #1c1c1c;letter-spacing:0.094px;">emission not set</span>
<div style="left:622px;top:583px;width:300px;height:1px;background:#9a9a9a"></div>
<div style="left:622px;top:584px;width:300px;height:6px;background:#e7e7e9"></div>
<div style="left:854px;top:470px;width:65px;height:16px;background:#e7e7e9;border-style:solid;border-width:1px 2px 2px 1px;border-color:#fbfbfb #8e8e8e #8e8e8e #fbfbfb;"></div>
<div style="left:857px;top:474px;width:7px;height:7px;background:#cc4c88;border:1px solid;border-color:#8a8a8a #fbfbfb #fbfbfb #8a8a8a"></div>
<span style="left:871.40px;top:473.99px;font-size:11px;line-height:11px;font-weight:normal;font-style:normal;color:#1c1c1c;-webkit-text-stroke:0.10px #1c1c1c;letter-spacing:0.253px;">No Zeros</span>
<div style="left:854px;top:490px;width:65px;height:16px;background:#e7e7e9;border-style:solid;border-width:1px 2px 2px 1px;border-color:#fbfbfb #8e8e8e #8e8e8e #fbfbfb;"></div>
<div style="left:857px;top:494px;width:7px;height:7px;background:#ececec;border:1px solid;border-color:#8a8a8a #fbfbfb #fbfbfb #8a8a8a"></div>
<span style="left:871.40px;top:493.79px;font-size:11px;line-height:11px;font-weight:normal;font-style:normal;color:#1c1c1c;-webkit-text-stroke:0.10px #1c1c1c;letter-spacing:0.253px;">No Zeros</span>
<div style="left:854px;top:510px;width:65px;height:16px;background:#e7e7e9;border-style:solid;border-width:1px 2px 2px 1px;border-color:#fbfbfb #8e8e8e #8e8e8e #fbfbfb;"></div>
<span style="left:855.70px;top:512.59px;font-size:11px;line-height:11px;font-weight:normal;font-style:normal;color:#1c1c1c;-webkit-text-stroke:0.10px #1c1c1c;letter-spacing:0.061px;">Wire Color</span>
<div style="left:854px;top:529px;width:65px;height:17px;background:#e7e7e9;border-style:solid;border-width:1px 2px 2px 1px;border-color:#fbfbfb #8e8e8e #8e8e8e #fbfbfb;"></div>
<span style="left:855.70px;top:532.09px;font-size:11px;line-height:11px;font-weight:normal;font-style:normal;color:#1c1c1c;-webkit-text-stroke:0.10px #1c1c1c;letter-spacing:0.024px;">Position</span>
<div style="left:14px;top:341px;width:203px;height:326px;background:#c4c4b8;border:1px solid;border-color:#e6e6de #9a9a90 #9a9a90 #e6e6de"></div>
<div style="left:15px;top:345px;width:203px;height:1px;background:#a4a49a"></div>
<div style="left:18px;top:342px;width:1px;height:326px;background:#a4a49a"></div>
<div style="left:40px;top:342px;width:1px;height:5px;background:#f2f2ec"></div>
<div style="left:192px;top:342px;width:1px;height:5px;background:#f2f2ec"></div>
<div style="left:15px;top:367px;width:5px;height:1px;background:#f2f2ec"></div>
<div style="left:213px;top:367px;width:5px;height:1px;background:#f2f2ec"></div>
<div style="left:40px;top:663px;width:1px;height:5px;background:#f2f2ec"></div>
<div style="left:192px;top:663px;width:1px;height:5px;background:#f2f2ec"></div>
<div style="left:15px;top:642px;width:5px;height:1px;background:#f2f2ec"></div>
<div style="left:213px;top:642px;width:5px;height:1px;background:#f2f2ec"></div>
<div style="left:19px;top:346px;width:193px;height:316px;border:1px solid #55554e;background:#e7e7e9"></div>
<div style="left:20px;top:347px;width:192px;height:20px;background:#a8a8a4;border-left:1px solid #e4e4e4;border-top:1px solid #e4e4e4"></div>
<div style="left:20px;top:367px;width:193px;height:1px;background:#2e2e2a"></div>
<div style="left:41px;top:348px;width:1px;height:19px;background:#858585"></div>
<div style="left:42px;top:348px;width:1px;height:19px;background:#e2e2e2"></div>
<div style="left:24px;top:355px;width:12px;height:2px;background:#cfcfcf;border:1px solid #151515;border-radius:1.5px;box-shadow:1px 1px 0 #151515"></div>
<div style="left:168px;top:348px;width:1px;height:19px;background:#858585"></div>
<div style="left:169px;top:348px;width:1px;height:19px;background:#e2e2e2"></div>
<div style="left:190px;top:348px;width:1px;height:19px;background:#858585"></div>
<div style="left:191px;top:348px;width:1px;height:19px;background:#e2e2e2"></div>
<div style="left:177px;top:356px;width:3px;height:3px;background:#151515;border-radius:1px;box-shadow:1px 1px 0 #666"></div>
<div style="left:196px;top:350px;width:10px;height:12px;border:1px solid #151515;background:#b8b8b8;box-shadow:1px 1px 0 #151515;border-radius:1.5px"></div>
<span style="left:53.00px;top:350.35px;font-size:14px;line-height:14px;font-weight:normal;font-style:italic;color:#141414;letter-spacing:-0.068px;-webkit-text-stroke:0.4px #141414;">Select Color</span>
<div style="left:22px;top:372px;width:124px;height:13px;background:#ff0000;border:1px solid #a00000"></div>
<div style="left:119px;top:374px;width:25px;height:9px;background:#e6e6e6;border-style:solid;border-width:1px 1px 1px 1px;border-color:#fbfbfb #8e8e8e #8e8e8e #fbfbfb;"></div>
<div style="left:132px;top:374px;width:1px;height:11px;background:#999"></div>
<span style="left:56.70px;top:391.89px;font-size:11px;line-height:11px;font-weight:bold;font-style:normal;color:#1c1c1c;-webkit-text-stroke:0.30px #1c1c1c;letter-spacing:-0.740px;">Red</span>
<div style="left:80px;top:389px;width:34px;height:14px;background:#e7e7e7;border-style:solid;border-width:1px 1px 1px 1px;border-color:#8e8e8e #fbfbfb #fbfbfb #8e8e8e;"></div>
<span style="left:82.00px;top:392.39px;font-size:11px;line-height:11px;font-weight:normal;font-style:normal;color:#1c1c1c;-webkit-text-stroke:0.10px #1c1c1c;letter-spacing:0.355px;">0.0</span>
<div style="left:22px;top:407px;width:124px;height:13px;background:#00ff00;border:1px solid #00a000"></div>
<div style="left:35px;top:409px;width:24px;height:9px;background:#e6e6e6;border-style:solid;border-width:1px 1px 1px 1px;border-color:#fbfbfb #8e8e8e #8e8e8e #fbfbfb;"></div>
<div style="left:48px;top:409px;width:1px;height:11px;background:#999"></div>
<span style="left:51.00px;top:427.39px;font-size:11px;line-height:11px;font-weight:bold;font-style:normal;color:#1c1c1c;-webkit-text-stroke:0.30px #1c1c1c;letter-spacing:-0.247px;">Green</span>
<div style="left:85px;top:424px;width:35px;height:14px;background:#e7e7e7;border-style:solid;border-width:1px 1px 1px 1px;border-color:#8e8e8e #fbfbfb #fbfbfb #8e8e8e;"></div>
<span style="left:87.00px;top:427.39px;font-size:11px;line-height:11px;font-weight:normal;font-style:normal;color:#1c1c1c;-webkit-text-stroke:0.10px #1c1c1c;letter-spacing:0.355px;">0.0</span>
<div style="left:22px;top:442px;width:124px;height:13px;background:#0000ff;border:1px solid #0000a0"></div>
<div style="left:24px;top:444px;width:25px;height:9px;background:#e6e6e6;border-style:solid;border-width:1px 1px 1px 1px;border-color:#fbfbfb #8e8e8e #8e8e8e #fbfbfb;"></div>
<div style="left:37px;top:444px;width:1px;height:11px;background:#999"></div>
<span style="left:55.60px;top:462.39px;font-size:11px;line-height:11px;font-weight:bold;font-style:normal;color:#1c1c1c;-webkit-text-stroke:0.30px #1c1c1c;letter-spacing:-0.712px;">Blue</span>
<div style="left:81px;top:459px;width:34px;height:14px;background:#e7e7e7;border-style:solid;border-width:1px 1px 1px 1px;border-color:#8e8e8e #fbfbfb #fbfbfb #8e8e8e;"></div>
<div style="left:159px;top:378px;width:43px;height:94px;background:#ff4000"></div>
<div style="left:20px;top:479px;width:192px;height:1px;background:#a8a8a8"></div>
<div style="left:20px;top:480px;width:192px;height:1px;background:#fafafa"></div>
<div style="left:40px;top:506px;width:14px;height:19px;background:#646464;box-shadow:inset 1px 1px 0 rgba(255,255,255,.35),inset -1px -1px 0 rgba(0,0,0,.35),1px 1px 0 rgba(0,0,0,.25)"></div>
<div style="left:57px;top:506px;width:14px;height:19px;background:#58a858;box-shadow:inset 1px 1px 0 rgba(255,255,255,.35),inset -1px -1px 0 rgba(0,0,0,.35),1px 1px 0 rgba(0,0,0,.25)"></div>
<div style="left:74px;top:506px;width:14px;height:19px;background:#68e068;box-shadow:inset 1px 1px 0 rgba(255,255,255,.35),inset -1px -1px 0 rgba(0,0,0,.35),1px 1px 0 rgba(0,0,0,.25)"></div>
<div style="left:91px;top:506px;width:14px;height:19px;background:#b06868;box-shadow:inset 1px 1px 0 rgba(255,255,255,.35),inset -1px -1px 0 rgba(0,0,0,.35),1px 1px 0 rgba(0,0,0,.25)"></div>
<div style="left:108px;top:506px;width:14px;height:19px;background:#b0b068;box-shadow:inset 1px 1px 0 rgba(255,255,255,.35),inset -1px -1px 0 rgba(0,0,0,.35),1px 1px 0 rgba(0,0,0,.25)"></div>
<div style="left:126px;top:506px;width:14px;height:19px;background:#b0f068;box-shadow:inset 1px 1px 0 rgba(255,255,255,.35),inset -1px -1px 0 rgba(0,0,0,.35),1px 1px 0 rgba(0,0,0,.25)"></div>
<div style="left:143px;top:506px;width:14px;height:19px;background:#f06868;box-shadow:inset 1px 1px 0 rgba(255,255,255,.35),inset -1px -1px 0 rgba(0,0,0,.35),1px 1px 0 rgba(0,0,0,.25)"></div>
<div style="left:160px;top:506px;width:14px;height:19px;background:#f0b068;box-shadow:inset 1px 1px 0 rgba(255,255,255,.35),inset -1px -1px 0 rgba(0,0,0,.35),1px 1px 0 rgba(0,0,0,.25)"></div>
<div style="left:177px;top:506px;width:14px;height:19px;background:#ffffff;box-shadow:inset 1px 1px 0 rgba(255,255,255,.35),inset -1px -1px 0 rgba(0,0,0,.35),1px 1px 0 rgba(0,0,0,.25)"></div>
<div style="left:40px;top:529px;width:14px;height:19px;background:#6868b0;box-shadow:inset 1px 1px 0 rgba(255,255,255,.35),inset -1px -1px 0 rgba(0,0,0,.35),1px 1px 0 rgba(0,0,0,.25)"></div>
<div style="left:57px;top:529px;width:14px;height:19px;background:#58a8a8;box-shadow:inset 1px 1px 0 rgba(255,255,255,.35),inset -1px -1px 0 rgba(0,0,0,.35),1px 1px 0 rgba(0,0,0,.25)"></div>
<div style="left:74px;top:529px;width:14px;height:19px;background:#68e0b0;box-shadow:inset 1px 1px 0 rgba(255,255,255,.35),inset -1px -1px 0 rgba(0,0,0,.35),1px 1px 0 rgba(0,0,0,.25)"></div>
<div style="left:91px;top:529px;width:14px;height:19px;background:#b068b0;box-shadow:inset 1px 1px 0 rgba(255,255,255,.35),inset -1px -1px 0 rgba(0,0,0,.35),1px 1px 0 rgba(0,0,0,.25)"></div>
<div style="left:108px;top:529px;width:14px;height:19px;background:#b0b0b0;box-shadow:inset 1px 1px 0 rgba(255,255,255,.35),inset -1px -1px 0 rgba(0,0,0,.35),1px 1px 0 rgba(0,0,0,.25)"></div>
<div style="left:126px;top:529px;width:14px;height:19px;background:#b0f0b0;box-shadow:inset 1px 1px 0 rgba(255,255,255,.35),inset -1px -1px 0 rgba(0,0,0,.35),1px 1px 0 rgba(0,0,0,.25)"></div>
<div style="left:143px;top:529px;width:14px;height:19px;background:#f068b0;box-shadow:inset 1px 1px 0 rgba(255,255,255,.35),inset -1px -1px 0 rgba(0,0,0,.35),1px 1px 0 rgba(0,0,0,.25)"></div>
<div style="left:160px;top:529px;width:14px;height:19px;background:#f0b0b0;box-shadow:inset 1px 1px 0 rgba(255,255,255,.35),inset -1px -1px 0 rgba(0,0,0,.35),1px 1px 0 rgba(0,0,0,.25)"></div>
<div style="left:177px;top:529px;width:14px;height:19px;background:#e0e0e0;box-shadow:inset 1px 1px 0 rgba(255,255,255,.35),inset -1px -1px 0 rgba(0,0,0,.35),1px 1px 0 rgba(0,0,0,.25)"></div>
<div style="left:40px;top:552px;width:14px;height:19px;background:#6868f0;box-shadow:inset 1px 1px 0 rgba(255,255,255,.35),inset -1px -1px 0 rgba(0,0,0,.35),1px 1px 0 rgba(0,0,0,.25)"></div>
<div style="left:57px;top:552px;width:14px;height:19px;background:#68b0f0;box-shadow:inset 1px 1px 0 rgba(255,255,255,.35),inset -1px -1px 0 rgba(0,0,0,.35),1px 1px 0 rgba(0,0,0,.25)"></div>
<div style="left:74px;top:552px;width:14px;height:19px;background:#68f0f0;box-shadow:inset 1px 1px 0 rgba(255,255,255,.35),inset -1px -1px 0 rgba(0,0,0,.35),1px 1px 0 rgba(0,0,0,.25)"></div>
<div style="left:91px;top:552px;width:14px;height:19px;background:#b068f0;box-shadow:inset 1px 1px 0 rgba(255,255,255,.35),inset -1px -1px 0 rgba(0,0,0,.35),1px 1px 0 rgba(0,0,0,.25)"></div>
<div style="left:108px;top:552px;width:14px;height:19px;background:#b0b0f0;box-shadow:inset 1px 1px 0 rgba(255,255,255,.35),inset -1px -1px 0 rgba(0,0,0,.35),1px 1px 0 rgba(0,0,0,.25)"></div>
<div style="left:126px;top:552px;width:14px;height:19px;background:#b0f0f0;box-shadow:inset 1px 1px 0 rgba(255,255,255,.35),inset -1px -1px 0 rgba(0,0,0,.35),1px 1px 0 rgba(0,0,0,.25)"></div>
<div style="left:143px;top:552px;width:14px;height:19px;background:#f068f0;box-shadow:inset 1px 1px 0 rgba(255,255,255,.35),inset -1px -1px 0 rgba(0,0,0,.35),1px 1px 0 rgba(0,0,0,.25)"></div>
<div style="left:160px;top:552px;width:14px;height:19px;background:#f0b0f0;box-shadow:inset 1px 1px 0 rgba(255,255,255,.35),inset -1px -1px 0 rgba(0,0,0,.35),1px 1px 0 rgba(0,0,0,.25)"></div>
<div style="left:177px;top:552px;width:14px;height:19px;background:#a0a0a0;box-shadow:inset 1px 1px 0 rgba(255,255,255,.35),inset -1px -1px 0 rgba(0,0,0,.35),1px 1px 0 rgba(0,0,0,.25)"></div>
<div style="left:40px;top:576px;width:14px;height:19px;background:#ff0000;box-shadow:inset 1px 1px 0 rgba(255,255,255,.35),inset -1px -1px 0 rgba(0,0,0,.35),1px 1px 0 rgba(0,0,0,.25)"></div>
<div style="left:57px;top:576px;width:14px;height:19px;background:#ff6000;box-shadow:inset 1px 1px 0 rgba(255,255,255,.35),inset -1px -1px 0 rgba(0,0,0,.35),1px 1px 0 rgba(0,0,0,.25)"></div>
<div style="left:74px;top:576px;width:14px;height:19px;background:#ff9000;box-shadow:inset 1px 1px 0 rgba(255,255,255,.35),inset -1px -1px 0 rgba(0,0,0,.35),1px 1px 0 rgba(0,0,0,.25)"></div>
<div style="left:91px;top:576px;width:14px;height:19px;background:#ffc000;box-shadow:inset 1px 1px 0 rgba(255,255,255,.35),inset -1px -1px 0 rgba(0,0,0,.35),1px 1px 0 rgba(0,0,0,.25)"></div>
<div style="left:108px;top:576px;width:14px;height:19px;background:#ffe000;box-shadow:inset 1px 1px 0 rgba(255,255,255,.35),inset -1px -1px 0 rgba(0,0,0,.35),1px 1px 0 rgba(0,0,0,.25)"></div>
<div style="left:126px;top:576px;width:14px;height:19px;background:#ffff00;box-shadow:inset 1px 1px 0 rgba(255,255,255,.35),inset -1px -1px 0 rgba(0,0,0,.35),1px 1px 0 rgba(0,0,0,.25)"></div>
<div style="left:143px;top:576px;width:14px;height:19px;background:#ffff60;box-shadow:inset 1px 1px 0 rgba(255,255,255,.35),inset -1px -1px 0 rgba(0,0,0,.35),1px 1px 0 rgba(0,0,0,.25)"></div>
<div style="left:160px;top:576px;width:14px;height:19px;background:#ffffb0;box-shadow:inset 1px 1px 0 rgba(255,255,255,.35),inset -1px -1px 0 rgba(0,0,0,.35),1px 1px 0 rgba(0,0,0,.25)"></div>
<div style="left:177px;top:576px;width:14px;height:19px;background:#646464;box-shadow:inset 1px 1px 0 rgba(255,255,255,.35),inset -1px -1px 0 rgba(0,0,0,.35),1px 1px 0 rgba(0,0,0,.25)"></div>
<div style="left:40px;top:599px;width:14px;height:19px;background:#00ffff;box-shadow:inset 1px 1px 0 rgba(255,255,255,.35),inset -1px -1px 0 rgba(0,0,0,.35),1px 1px 0 rgba(0,0,0,.25)"></div>
<div style="left:57px;top:599px;width:14px;height:19px;background:#00c8ff;box-shadow:inset 1px 1px 0 rgba(255,255,255,.35),inset -1px -1px 0 rgba(0,0,0,.35),1px 1px 0 rgba(0,0,0,.25)"></div>
<div style="left:74px;top:599px;width:14px;height:19px;background:#0090ff;box-shadow:inset 1px 1px 0 rgba(255,255,255,.35),inset -1px -1px 0 rgba(0,0,0,.35),1px 1px 0 rgba(0,0,0,.25)"></div>
<div style="left:91px;top:599px;width:14px;height:19px;background:#0060ff;box-shadow:inset 1px 1px 0 rgba(255,255,255,.35),inset -1px -1px 0 rgba(0,0,0,.35),1px 1px 0 rgba(0,0,0,.25)"></div>
<div style="left:108px;top:599px;width:14px;height:19px;background:#0000ff;box-shadow:inset 1px 1px 0 rgba(255,255,255,.35),inset -1px -1px 0 rgba(0,0,0,.35),1px 1px 0 rgba(0,0,0,.25)"></div>
<div style="left:126px;top:599px;width:14px;height:19px;background:#0000e8;box-shadow:inset 1px 1px 0 rgba(255,255,255,.35),inset -1px -1px 0 rgba(0,0,0,.35),1px 1px 0 rgba(0,0,0,.25)"></div>
<div style="left:143px;top:599px;width:14px;height:19px;background:#0000b0;box-shadow:inset 1px 1px 0 rgba(255,255,255,.35),inset -1px -1px 0 rgba(0,0,0,.35),1px 1px 0 rgba(0,0,0,.25)"></div>
<div style="left:160px;top:599px;width:14px;height:19px;background:#000078;box-shadow:inset 1px 1px 0 rgba(255,255,255,.35),inset -1px -1px 0 rgba(0,0,0,.35),1px 1px 0 rgba(0,0,0,.25)"></div>
<div style="left:177px;top:599px;width:14px;height:19px;background:#000000;box-shadow:inset 1px 1px 0 rgba(255,255,255,.35),inset -1px -1px 0 rgba(0,0,0,.35),1px 1px 0 rgba(0,0,0,.25)"></div>
<span style="left:41.00px;top:646.39px;font-size:11px;line-height:11px;font-weight:bold;font-style:normal;color:#1c1c1c;-webkit-text-stroke:0.30px #1c1c1c;letter-spacing:-0.724px;">Wire Color</span>
<div style="left:121px;top:642px;width:20px;height:16px;background:#e7e7e9;border-style:solid;border-width:1px 2px 2px 1px;border-color:#fbfbfb #8e8e8e #8e8e8e #fbfbfb;"></div>
<span style="left:123.00px;top:645.09px;font-size:11px;line-height:11px;font-weight:normal;font-style:normal;color:#1c1c1c;-webkit-text-stroke:0.10px #1c1c1c;letter-spacing:0.507px;">OK</span>
<div style="left:161px;top:642px;width:37px;height:16px;background:#e7e7e9;border-style:solid;border-width:1px 2px 2px 1px;border-color:#fbfbfb #8e8e8e #8e8e8e #fbfbfb;"></div>
<span style="left:163.00px;top:645.09px;font-size:11px;line-height:11px;font-weight:normal;font-style:normal;color:#1c1c1c;-webkit-text-stroke:0.10px #1c1c1c;letter-spacing:0.152px;">Cancel</span>
<div style="left:437px;top:476px;width:177px;height:201px;background:#c4c4b8;border:1px solid;border-color:#e6e6de #9a9a90 #9a9a90 #e6e6de"></div>
<div style="left:438px;top:480px;width:177px;height:1px;background:#a4a49a"></div>
<div style="left:441px;top:477px;width:1px;height:201px;background:#a4a49a"></div>
<div style="left:463px;top:477px;width:1px;height:5px;background:#f2f2ec"></div>
<div style="left:589px;top:477px;width:1px;height:5px;background:#f2f2ec"></div>
<div style="left:438px;top:502px;width:5px;height:1px;background:#f2f2ec"></div>
<div style="left:610px;top:502px;width:5px;height:1px;background:#f2f2ec"></div>
<div style="left:463px;top:673px;width:1px;height:5px;background:#f2f2ec"></div>
<div style="left:589px;top:673px;width:1px;height:5px;background:#f2f2ec"></div>
<div style="left:438px;top:652px;width:5px;height:1px;background:#f2f2ec"></div>
<div style="left:610px;top:652px;width:5px;height:1px;background:#f2f2ec"></div>
<div style="left:442px;top:481px;width:167px;height:191px;border:1px solid #55554e;background:#e7e7e9"></div>
<div style="left:443px;top:482px;width:166px;height:20px;background:#a8a8a4;border-left:1px solid #e4e4e4;border-top:1px solid #e4e4e4"></div>
<div style="left:443px;top:502px;width:167px;height:1px;background:#2e2e2a"></div>
<div style="left:464px;top:483px;width:1px;height:19px;background:#858585"></div>
<div style="left:465px;top:483px;width:1px;height:19px;background:#e2e2e2"></div>
<div style="left:447px;top:490px;width:12px;height:2px;background:#cfcfcf;border:1px solid #151515;border-radius:1.5px;box-shadow:1px 1px 0 #151515"></div>
<div style="left:565px;top:483px;width:1px;height:19px;background:#858585"></div>
<div style="left:566px;top:483px;width:1px;height:19px;background:#e2e2e2"></div>
<div style="left:587px;top:483px;width:1px;height:19px;background:#858585"></div>
<div style="left:588px;top:483px;width:1px;height:19px;background:#e2e2e2"></div>
<div style="left:574px;top:491px;width:3px;height:3px;background:#151515;border-radius:1px;box-shadow:1px 1px 0 #666"></div>
<div style="left:593px;top:485px;width:10px;height:12px;border:1px solid #151515;background:#b8b8b8;box-shadow:1px 1px 0 #151515;border-radius:1.5px"></div>
<span style="left:467.70px;top:485.35px;font-size:14px;line-height:14px;font-weight:normal;font-style:italic;color:#141414;letter-spacing:0.032px;-webkit-text-stroke:0.4px #141414;">Position Surfac</span>
<div style="left:449px;top:507px;width:15px;height:88px;background:#e7e7e9;border-style:solid;border-width:1px 1px 1px 1px;border-color:#8e8e8e #fbfbfb #fbfbfb #8e8e8e;"></div>
<div style="left:451px;top:540px;width:11px;height:22px;background:#e6e6e6;border-style:solid;border-width:1px 1px 1px 1px;border-color:#fbfbfb #8e8e8e #8e8e8e #fbfbfb;"></div>
<div style="left:451px;top:551px;width:13px;height:1px;background:#999"></div>
<div style="left:484px;top:507px;width:109px;height:109px;background:#e7e7e9;border-style:solid;border-width:2px 2px 2px 2px;border-color:#8e8e8e #fbfbfb #fbfbfb #8e8e8e;"></div>
<div style="left:540px;top:510px;width:1px;height:106px;background:#222"></div>
<div style="left:487px;top:563px;width:106px;height:1px;background:#222"></div>
<span style="left:449.00px;top:630.39px;font-size:11px;line-height:11px;font-weight:bold;font-style:normal;color:#1c1c1c;-webkit-text-stroke:0.30px #1c1c1c;letter-spacing:1.619px;">Z:</span>
<div style="left:462px;top:627px;width:35px;height:15px;background:#e7e7e7;border-style:solid;border-width:1px 1px 1px 1px;border-color:#8e8e8e #fbfbfb #fbfbfb #8e8e8e;"></div>
<div style="left:463px;top:628px;width:34px;height:15px;overflow:hidden">
<span style="left:1px;top:1.69px;font-size:11px;line-height:11px;color:#1c1c1c;letter-spacing:0.783px">-90.909</span></div>
<span style="left:502.60px;top:630.39px;font-size:11px;line-height:11px;font-weight:bold;font-style:normal;color:#1c1c1c;-webkit-text-stroke:0.30px #1c1c1c;letter-spacing:1.000px;">X:</span>
<div style="left:516px;top:627px;width:34px;height:15px;background:#e7e7e7;border-style:solid;border-width:1px 1px 1px 1px;border-color:#8e8e8e #fbfbfb #fbfbfb #8e8e8e;"></div>
<span style="left:518.00px;top:630.39px;font-size:11px;line-height:11px;font-weight:normal;font-style:normal;color:#1c1c1c;-webkit-text-stroke:0.10px #1c1c1c;letter-spacing:0.355px;">0.0</span>
<span style="left:556.70px;top:630.39px;font-size:11px;line-height:11px;font-weight:bold;font-style:normal;color:#1c1c1c;-webkit-text-stroke:0.30px #1c1c1c;letter-spacing:1.816px;">Y:</span>
<div style="left:569px;top:627px;width:37px;height:15px;background:#e7e7e7;border-style:solid;border-width:1px 1px 1px 1px;border-color:#8e8e8e #fbfbfb #fbfbfb #8e8e8e;"></div>
<span style="left:571.00px;top:630.39px;font-size:11px;line-height:11px;font-weight:normal;font-style:normal;color:#1c1c1c;-webkit-text-stroke:0.10px #1c1c1c;letter-spacing:0.355px;">0.0</span>
<div style="left:450px;top:648px;width:71px;height:16px;background:#e7e7e9;border-style:solid;border-width:1px 2px 2px 1px;border-color:#fbfbfb #8e8e8e #8e8e8e #fbfbfb;"></div>
<span style="left:470.80px;top:651.09px;font-size:11px;line-height:11px;font-weight:normal;font-style:normal;color:#1c1c1c;-webkit-text-stroke:0.10px #1c1c1c;letter-spacing:-0.234px;">Reset</span>
<div style="left:529px;top:648px;width:73px;height:16px;background:#e7e7e9;border-style:solid;border-width:1px 2px 2px 1px;border-color:#fbfbfb #8e8e8e #8e8e8e #fbfbfb;"></div>
<span style="left:551.40px;top:651.09px;font-size:11px;line-height:11px;font-weight:normal;font-style:normal;color:#1c1c1c;-webkit-text-stroke:0.10px #1c1c1c;letter-spacing:0.094px;">Close</span>
</body></html>
